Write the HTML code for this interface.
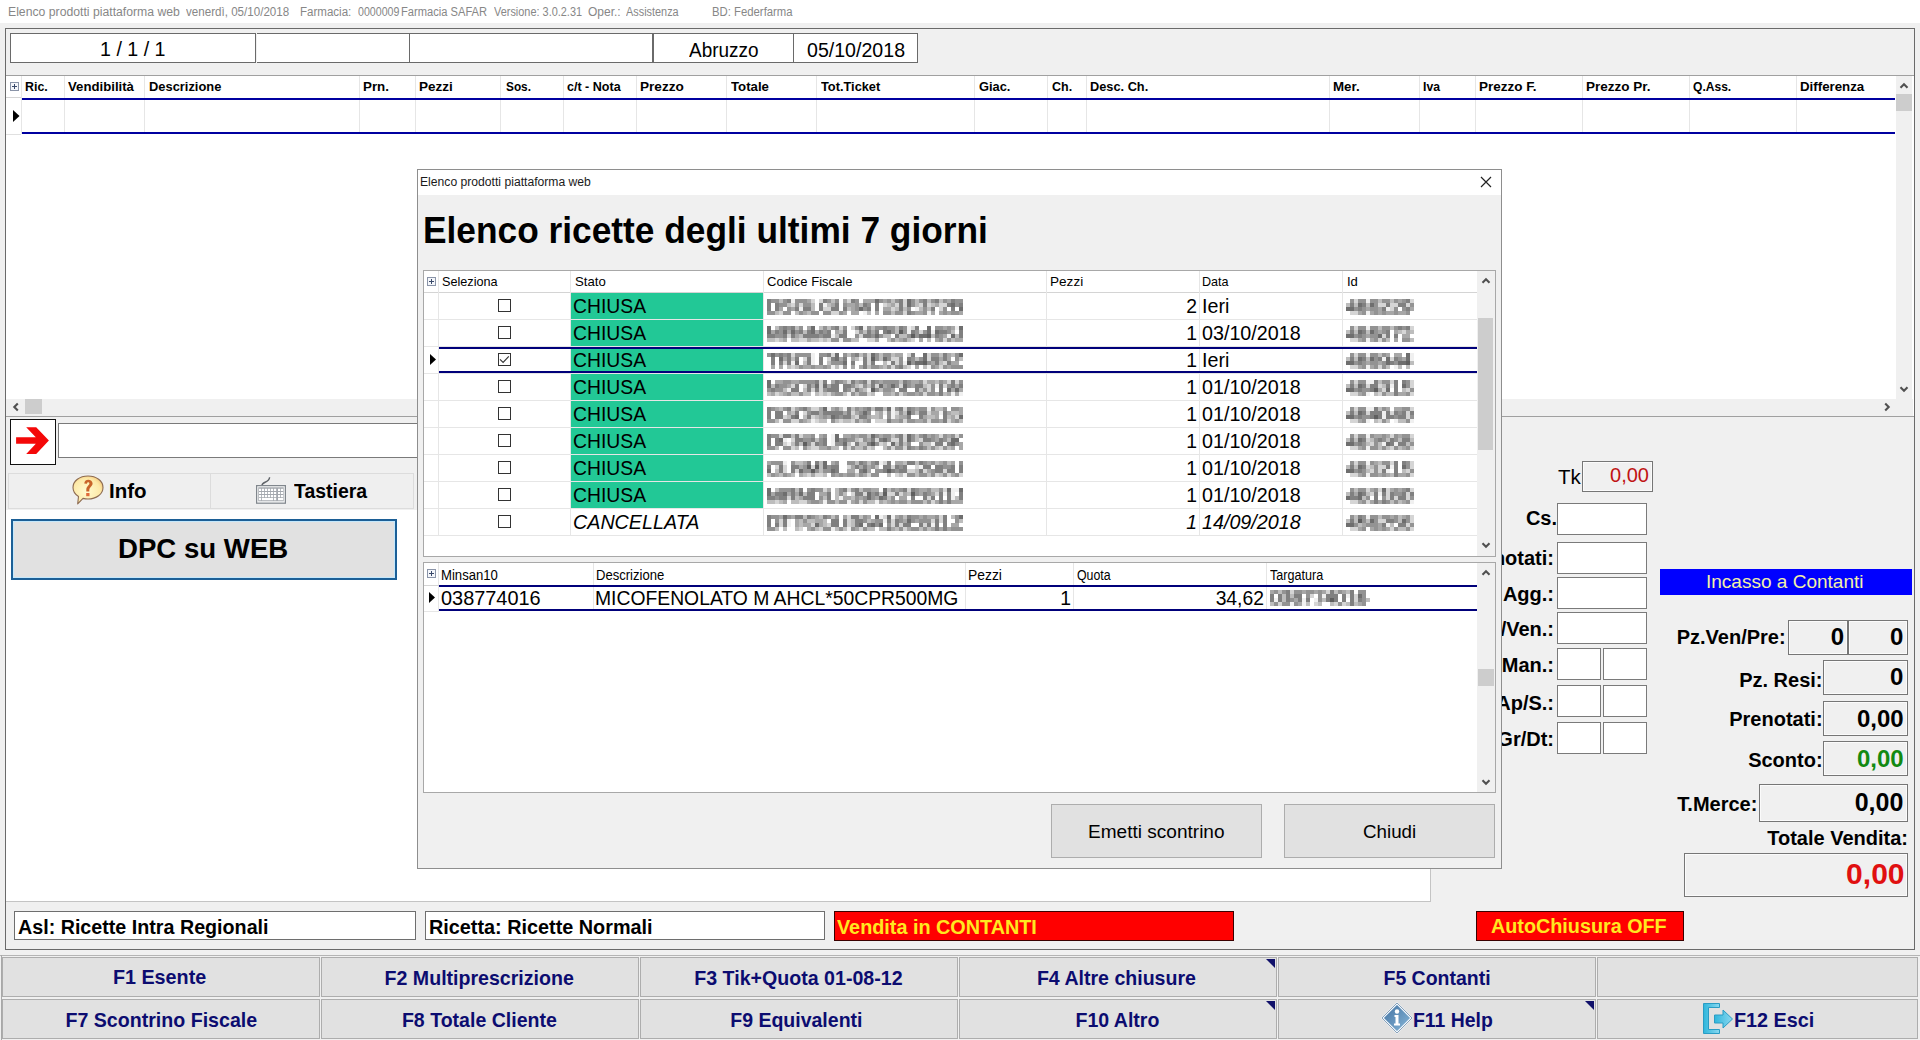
<!DOCTYPE html>
<html><head><meta charset="utf-8"><style>
*{box-sizing:border-box;margin:0;padding:0}
html,body{width:1920px;height:1040px;overflow:hidden;background:#f0f0f0;font-family:"Liberation Sans",sans-serif;color:#000}
.a{position:absolute}
.t{position:absolute;white-space:nowrap;line-height:1}
.sx{display:inline-block;transform-origin:0 0}
</style></head><body>
<div class="a" style="left:0px;top:0px;width:1920px;height:23px;background:#fff"></div>
<div class="t" style="left:7.70px;top:6.08px;font-size:12.5px;color:#878787;"><span class="sx" style="transform:scaleX(0.9779)">Elenco prodotti piattaforma web</span></div>
<div class="t" style="left:185.80px;top:6.08px;font-size:12.5px;color:#878787;"><span class="sx" style="transform:scaleX(0.9281)">venerdì, 05/10/2018</span></div>
<div class="t" style="left:299.80px;top:6.08px;font-size:12.5px;color:#878787;"><span class="sx" style="transform:scaleX(0.9231)">Farmacia:</span></div>
<div class="t" style="left:357.60px;top:6.08px;font-size:12.5px;color:#878787;"><span class="sx" style="transform:scaleX(0.8514)">0000009</span></div>
<div class="t" style="left:401.00px;top:6.08px;font-size:12.5px;color:#878787;"><span class="sx" style="transform:scaleX(0.8912)">Farmacia SAFAR</span></div>
<div class="t" style="left:494.00px;top:6.08px;font-size:12.5px;color:#878787;"><span class="sx" style="transform:scaleX(0.8735)">Versione: 3.0.2.31</span></div>
<div class="t" style="left:588.00px;top:6.08px;font-size:12.5px;color:#878787;"><span class="sx" style="transform:scaleX(0.9603)">Oper.:</span></div>
<div class="t" style="left:626.40px;top:6.08px;font-size:12.5px;color:#878787;"><span class="sx" style="transform:scaleX(0.8706)">Assistenza</span></div>
<div class="t" style="left:712.00px;top:6.08px;font-size:12.5px;color:#878787;"><span class="sx" style="transform:scaleX(0.9066)">BD: Federfarma</span></div>
<div class="a" style="left:5px;top:28px;width:1910px;height:922px;border:1px solid #6a6a6a"></div>
<div class="a" style="left:10px;top:33px;width:246px;height:30px;border:1px solid #6a6a6a;background:#fff"></div>
<div class="a" style="left:257px;top:33px;width:152px;height:30px;border:1px solid #6a6a6a;border-left:none;border-right:none;background:#fff"></div>
<div class="a" style="left:409px;top:33px;width:244px;height:30px;border:1px solid #6a6a6a;background:#fff"></div>
<div class="a" style="left:653px;top:33px;width:141px;height:30px;border:1px solid #6a6a6a;background:#fff"></div>
<div class="a" style="left:793px;top:33px;width:125px;height:30px;border:1px solid #6a6a6a;background:#fff"></div>
<div class="t" style="left:100.00px;top:39.34px;font-size:20.5px;"><span class="sx" style="transform:scaleX(0.9587)">1 / 1 / 1</span></div>
<div class="t" style="left:689.00px;top:39.59px;font-size:20.5px;"><span class="sx" style="transform:scaleX(0.9240)">Abruzzo</span></div>
<div class="t" style="left:806.50px;top:39.59px;font-size:20.5px;"><span class="sx" style="transform:scaleX(0.9554)">05/10/2018</span></div>
<div class="a" style="left:6px;top:75px;width:1908px;height:342px;background:#fff;border-top:1px solid #a0a0a0;border-bottom:1px solid #a0a0a0"></div>
<div class="a" style="left:21px;top:76px;width:1px;height:58px;background:#e6e6e6"></div>
<div class="a" style="left:64px;top:76px;width:1px;height:58px;background:#e6e6e6"></div>
<div class="a" style="left:144px;top:76px;width:1px;height:58px;background:#e6e6e6"></div>
<div class="a" style="left:359px;top:76px;width:1px;height:58px;background:#e6e6e6"></div>
<div class="a" style="left:415px;top:76px;width:1px;height:58px;background:#e6e6e6"></div>
<div class="a" style="left:500px;top:76px;width:1px;height:58px;background:#e6e6e6"></div>
<div class="a" style="left:563px;top:76px;width:1px;height:58px;background:#e6e6e6"></div>
<div class="a" style="left:636px;top:76px;width:1px;height:58px;background:#e6e6e6"></div>
<div class="a" style="left:726px;top:76px;width:1px;height:58px;background:#e6e6e6"></div>
<div class="a" style="left:816px;top:76px;width:1px;height:58px;background:#e6e6e6"></div>
<div class="a" style="left:974px;top:76px;width:1px;height:58px;background:#e6e6e6"></div>
<div class="a" style="left:1047px;top:76px;width:1px;height:58px;background:#e6e6e6"></div>
<div class="a" style="left:1086px;top:76px;width:1px;height:58px;background:#e6e6e6"></div>
<div class="a" style="left:1329px;top:76px;width:1px;height:58px;background:#e6e6e6"></div>
<div class="a" style="left:1419px;top:76px;width:1px;height:58px;background:#e6e6e6"></div>
<div class="a" style="left:1475px;top:76px;width:1px;height:58px;background:#e6e6e6"></div>
<div class="a" style="left:1582px;top:76px;width:1px;height:58px;background:#e6e6e6"></div>
<div class="a" style="left:1689px;top:76px;width:1px;height:58px;background:#e6e6e6"></div>
<div class="a" style="left:1796px;top:76px;width:1px;height:58px;background:#e6e6e6"></div>
<div class="a" style="left:6px;top:97px;width:15px;height:1px;background:#d4d4d4"></div>
<div class="a" style="left:6px;top:134px;width:15px;height:1px;background:#e0e0e0"></div>
<div class="a" style="left:22px;top:98px;width:1873px;height:2px;background:#0000a0"></div>
<div class="a" style="left:22px;top:132px;width:1873px;height:2px;background:#0000a0"></div>
<svg class="a" style="left:10px;top:82px" width="9" height="9"><rect x="0.5" y="0.5" width="8" height="8" fill="#f4f6fa" stroke="#8a94a8"/><path d="M2 4.5 H7 M4.5 2 V7" stroke="#3a4a6a" stroke-width="1"/></svg>
<div class="t" style="left:25.00px;top:80.27px;font-size:13.33px;font-weight:bold;"><span class="sx" style="transform:scaleX(0.9317)">Ric.</span></div>
<div class="t" style="left:68.00px;top:80.27px;font-size:13.33px;font-weight:bold;"><span class="sx" style="transform:scaleX(0.9895)">Vendibilità</span></div>
<div class="t" style="left:149.00px;top:80.27px;font-size:13.33px;font-weight:bold;"><span class="sx" style="transform:scaleX(0.9667)">Descrizione</span></div>
<div class="t" style="left:363.00px;top:80.27px;font-size:13.33px;font-weight:bold;"><span class="sx" style="transform:scaleX(1.0016)">Prn.</span></div>
<div class="t" style="left:419.00px;top:80.27px;font-size:13.33px;font-weight:bold;"><span class="sx" style="transform:scaleX(1.0117)">Pezzi</span></div>
<div class="t" style="left:506.00px;top:80.27px;font-size:13.33px;font-weight:bold;"><span class="sx" style="transform:scaleX(0.8871)">Sos.</span></div>
<div class="t" style="left:567.00px;top:80.27px;font-size:13.33px;font-weight:bold;"><span class="sx" style="transform:scaleX(0.9400)">c/t - Nota</span></div>
<div class="t" style="left:640.00px;top:80.27px;font-size:13.33px;font-weight:bold;"><span class="sx" style="transform:scaleX(1.0193)">Prezzo</span></div>
<div class="t" style="left:731.00px;top:80.27px;font-size:13.33px;font-weight:bold;"><span class="sx" style="transform:scaleX(0.9901)">Totale</span></div>
<div class="t" style="left:821.00px;top:80.27px;font-size:13.33px;font-weight:bold;"><span class="sx" style="transform:scaleX(0.9597)">Tot.Ticket</span></div>
<div class="t" style="left:979.00px;top:80.27px;font-size:13.33px;font-weight:bold;"><span class="sx" style="transform:scaleX(0.9638)">Giac.</span></div>
<div class="t" style="left:1052.00px;top:80.27px;font-size:13.33px;font-weight:bold;"><span class="sx" style="transform:scaleX(0.9366)">Ch.</span></div>
<div class="t" style="left:1090.00px;top:80.27px;font-size:13.33px;font-weight:bold;"><span class="sx" style="transform:scaleX(0.9583)">Desc. Ch.</span></div>
<div class="t" style="left:1333.00px;top:80.27px;font-size:13.33px;font-weight:bold;"><span class="sx" style="transform:scaleX(1.0000)">Mer.</span></div>
<div class="t" style="left:1423.00px;top:80.27px;font-size:13.33px;font-weight:bold;"><span class="sx" style="transform:scaleX(0.9150)">Iva</span></div>
<div class="t" style="left:1479.00px;top:80.27px;font-size:13.33px;font-weight:bold;"><span class="sx" style="transform:scaleX(1.0103)">Prezzo F.</span></div>
<div class="t" style="left:1586.00px;top:80.27px;font-size:13.33px;font-weight:bold;"><span class="sx" style="transform:scaleX(1.0125)">Prezzo Pr.</span></div>
<div class="t" style="left:1693.00px;top:80.27px;font-size:13.33px;font-weight:bold;"><span class="sx" style="transform:scaleX(0.9048)">Q.Ass.</span></div>
<div class="t" style="left:1800.00px;top:80.27px;font-size:13.33px;font-weight:bold;"><span class="sx" style="transform:scaleX(0.9969)">Differenza</span></div>
<svg class="a" style="left:13px;top:110px" width="7" height="12"><path d="M0 0 L6.5 6 L0 12 Z" fill="#000"/></svg>
<div class="a" style="left:1896px;top:76px;width:16px;height:323px;background:#f0f0f0"></div>
<div class="a" style="left:1896px;top:94px;width:16px;height:17px;background:#cdcdcd"></div>
<svg class="a" style="left:1899px;top:82px" width="10" height="7"><path d="M1.5 5.8 L5 2.3 L8.5 5.8" stroke="#505050" stroke-width="2.1" fill="none"/></svg>
<svg class="a" style="left:1899px;top:386px" width="10" height="7"><path d="M1.5 1.2 L5 4.7 L8.5 1.2" stroke="#505050" stroke-width="2.1" fill="none"/></svg>
<div class="a" style="left:6px;top:399px;width:1907px;height:17px;background:#f0f0f0"></div>
<div class="a" style="left:25px;top:399px;width:17px;height:15px;background:#cdcdcd"></div>
<svg class="a" style="left:12px;top:402px" width="7" height="10"><path d="M5.8 1.5 L2.3 5 L5.8 8.5" stroke="#505050" stroke-width="2.1" fill="none"/></svg>
<svg class="a" style="left:1884px;top:402px" width="7" height="10"><path d="M1.2 1.5 L4.7 5 L1.2 8.5" stroke="#505050" stroke-width="2.1" fill="none"/></svg>
<div class="a" style="left:10px;top:419px;width:46px;height:46px;background:#fff;border:1px solid #111"></div>
<svg class="a" style="left:15px;top:427px" width="36" height="29"><path d="M1.1 10.2 L20.8 10.2 L11.2 0.2 L21.2 0.2 L33.9 13.4 L21.2 26.9 L11.2 26.9 L20.8 16.8 L1.1 16.8 Z" fill="#f40808"/></svg>
<div class="a" style="left:58px;top:423px;width:400px;height:35px;background:#fff;border:1px solid #7a7a7a"></div>
<div class="a" style="left:8px;top:473px;width:203px;height:36px;background:#efefef;border:1px solid #dcdcdc"></div>
<div class="a" style="left:210px;top:473px;width:204px;height:36px;background:#efefef;border:1px solid #dcdcdc"></div>
<div class="t" style="left:109.00px;top:481.00px;font-size:20px;font-weight:bold;"><span class="sx" style="transform:scaleX(1.0241)">Info</span></div>
<div class="t" style="left:294.40px;top:481.40px;font-size:20px;font-weight:bold;"><span class="sx" style="transform:scaleX(0.9715)">Tastiera</span></div>
<svg class="a" style="left:72px;top:475px" width="34" height="32"><defs><radialGradient id="qg" cx="45%" cy="55%" r="65%"><stop offset="0" stop-color="#fffbd0"/><stop offset="0.7" stop-color="#fde9a8"/><stop offset="1" stop-color="#f5c070"/></radialGradient></defs><path d="M6.5 21.5 C2.5 19 1 16 1 12.5 C1 5.8 7.7 1 16 1 C24.3 1 31 5.8 31 12.5 C31 19.2 24.3 24 16 24 C14.2 24 12.6 23.8 11 23.4 L5.7 28.8 Z" fill="url(#qg)" stroke="#8c6a50" stroke-width="1.1" stroke-linejoin="round"/><path d="M12.2 8.6 C12.6 5.8 14.4 4.8 16.2 4.8 C18.6 4.8 20.6 6.2 20.6 8.6 C20.6 11.6 17.3 12 17.3 15.2 L17.3 16.5 L14.3 16.5 L14.3 15 C14.3 11 17.4 10.6 17.4 8.6 C17.4 7.6 16.8 7.2 16.2 7.2 C15.4 7.2 15 7.8 14.9 8.8 Z" fill="#c8642a"/><rect x="14.2" y="18" width="3.3" height="3.2" fill="#e06a3a"/></svg>
<svg class="a" style="left:256px;top:476px" width="31" height="29"><path d="M6 9.3 C6 5.5 13.2 7 13.6 1.2" stroke="#5f6368" stroke-width="1.4" fill="none"/><rect x="0.6" y="9.6" width="28.8" height="17.6" fill="#f4f5f6" stroke="#80868c" stroke-width="1.2"/><rect x="2.3" y="11.3" width="25.4" height="13.9" fill="#a4a8ae"/><path fill="#ffffff" d="M3 12.8h2.2v2.2h-2.2zM6 12.8h2.2v2.2h-2.2zM9 12.8h2.2v2.2h-2.2zM12 12.8h2.2v2.2h-2.2zM15 12.8h2.2v2.2h-2.2zM18 12.8h2.2v2.2h-2.2zM22 12.8h2.2v2.2h-2.2zM25 12.8h2.2v2.2h-2.2zM3 15.9h2.2v2.2h-2.2zM6 15.9h2.2v2.2h-2.2zM9 15.9h2.2v2.2h-2.2zM12 15.9h2.2v2.2h-2.2zM15 15.9h2.2v2.2h-2.2zM18 15.9h2.2v2.2h-2.2zM22 15.9h2.2v2.2h-2.2zM25 15.9h2.2v2.2h-2.2zM3 19h2.2v2.2h-2.2zM6 19h2.2v2.2h-2.2zM9 19h2.2v2.2h-2.2zM12 19h2.2v2.2h-2.2zM15 19h2.2v2.2h-2.2zM18 19h2.2v2.2h-2.2zM22 19h2.2v2.2h-2.2zM25 19h2.2v2.2h-2.2zM3 22h2.2v2.2h-2.2zM18 22h2.2v2.2h-2.2zM22 22h2.2v2.2h-2.2zM6 22h11.2v2.2h-11.2zM22 22h5.2v2.2h-5.2z"/></svg>
<div class="a" style="left:6px;top:510px;width:1425px;height:392px;background:#fff;border-right:1px solid #c4c4c4;border-bottom:1px solid #c4c4c4"></div>
<div class="a" style="left:11px;top:519px;width:386px;height:61px;background:#e1e1e1;border:2px solid #1c5f96;box-shadow:inset 0 0 0 1px #c4e8fc"></div>
<div class="t" style="left:118.00px;top:535.36px;font-size:28px;font-weight:bold;"><span class="sx" style="transform:scaleX(0.9859)">DPC su WEB</span></div>
<div class="t" style="left:980.80px;top:467.33px;width:600px;text-align:right;font-size:20.5px;"><span class="sx" style="transform-origin:100% 0;transform:scaleX(1.0000)">Tk</span></div>
<div class="a" style="left:1582px;top:461px;width:71px;height:31px;border:1px solid #767676;box-shadow:inset 0 0 0 1px #fbfbfb"></div>
<div class="t" style="left:1049.00px;top:465.20px;width:600px;text-align:right;font-size:20px;color:#c01414"><span class="sx" style="transform-origin:100% 0;transform:scaleX(1.0000)">0,00</span></div>
<div class="t" style="left:957.00px;top:508.40px;width:600px;text-align:right;font-size:20px;font-weight:bold;"><span class="sx" style="transform-origin:100% 0;transform:scaleX(1.0000)">Cs.</span></div>
<div class="a" style="left:1557px;top:503px;width:90px;height:32px;background:#fff;border:1px solid #7a7a7a"></div>
<div class="t" style="left:954.00px;top:548.40px;width:600px;text-align:right;font-size:20px;font-weight:bold;"><span class="sx" style="transform-origin:100% 0;transform:scaleX(1.0000)">Prenotati:</span></div>
<div class="a" style="left:1557px;top:542px;width:90px;height:32px;background:#fff;border:1px solid #7a7a7a"></div>
<div class="t" style="left:954.00px;top:584.40px;width:600px;text-align:right;font-size:20px;font-weight:bold;"><span class="sx" style="transform-origin:100% 0;transform:scaleX(1.0000)">Pr.Agg.:</span></div>
<div class="a" style="left:1557px;top:577px;width:90px;height:32px;background:#fff;border:1px solid #7a7a7a"></div>
<div class="t" style="left:954.00px;top:619.40px;width:600px;text-align:right;font-size:20px;font-weight:bold;"><span class="sx" style="transform-origin:100% 0;transform:scaleX(1.0000)">Pz/Ven.:</span></div>
<div class="a" style="left:1557px;top:612px;width:90px;height:32px;background:#fff;border:1px solid #7a7a7a"></div>
<div class="t" style="left:954.00px;top:655.40px;width:600px;text-align:right;font-size:20px;font-weight:bold;"><span class="sx" style="transform-origin:100% 0;transform:scaleX(1.0000)">Pr.Man.:</span></div>
<div class="a" style="left:1557px;top:648px;width:44px;height:32px;background:#fff;border:1px solid #7a7a7a"></div>
<div class="a" style="left:1603px;top:648px;width:44px;height:32px;background:#fff;border:1px solid #7a7a7a"></div>
<div class="t" style="left:954.00px;top:693.40px;width:600px;text-align:right;font-size:20px;font-weight:bold;"><span class="sx" style="transform-origin:100% 0;transform:scaleX(1.0000)">Tr.Ap/S.:</span></div>
<div class="a" style="left:1557px;top:685px;width:44px;height:32px;background:#fff;border:1px solid #7a7a7a"></div>
<div class="a" style="left:1603px;top:685px;width:44px;height:32px;background:#fff;border:1px solid #7a7a7a"></div>
<div class="t" style="left:954.00px;top:729.40px;width:600px;text-align:right;font-size:20px;font-weight:bold;"><span class="sx" style="transform-origin:100% 0;transform:scaleX(1.0000)">Gr/Dt:</span></div>
<div class="a" style="left:1557px;top:722px;width:44px;height:32px;background:#fff;border:1px solid #7a7a7a"></div>
<div class="a" style="left:1603px;top:722px;width:44px;height:32px;background:#fff;border:1px solid #7a7a7a"></div>
<div class="a" style="left:1660px;top:569px;width:252px;height:26px;background:#0000ff"></div>
<div class="t" style="left:1706.00px;top:573.00px;font-size:18.5px;color:#f2f0a8;"><span class="sx" style="transform:scaleX(1.0279)">Incasso a Contanti</span></div>
<div class="t" style="left:1185.60px;top:627.00px;width:600px;text-align:right;font-size:20px;font-weight:bold;"><span class="sx" style="transform-origin:100% 0;transform:scaleX(1.0000)">Pz.Ven/Pre:</span></div>
<div class="a" style="left:1788px;top:620px;width:60px;height:35px;border:1px solid #767676;box-shadow:inset 0 0 0 1px #fbfbfb"></div>
<div class="a" style="left:1848px;top:620px;width:60px;height:35px;border:1px solid #767676;box-shadow:inset 0 0 0 1px #fbfbfb"></div>
<div class="t" style="left:1244.00px;top:625.28px;width:600px;text-align:right;font-size:24px;font-weight:bold;"><span class="sx" style="transform-origin:100% 0;transform:scaleX(1.0000)">0</span></div>
<div class="t" style="left:1303.40px;top:625.28px;width:600px;text-align:right;font-size:24px;font-weight:bold;"><span class="sx" style="transform-origin:100% 0;transform:scaleX(1.0000)">0</span></div>
<div class="t" style="left:1222.50px;top:669.90px;width:600px;text-align:right;font-size:20px;font-weight:bold;"><span class="sx" style="transform-origin:100% 0;transform:scaleX(1.0000)">Pz. Resi:</span></div>
<div class="a" style="left:1823px;top:660px;width:85px;height:35px;border:1px solid #767676;box-shadow:inset 0 0 0 1px #fbfbfb"></div>
<div class="t" style="left:1303.40px;top:665.28px;width:600px;text-align:right;font-size:24px;font-weight:bold;"><span class="sx" style="transform-origin:100% 0;transform:scaleX(1.0000)">0</span></div>
<div class="t" style="left:1222.60px;top:709.20px;width:600px;text-align:right;font-size:20px;font-weight:bold;"><span class="sx" style="transform-origin:100% 0;transform:scaleX(1.0000)">Prenotati:</span></div>
<div class="a" style="left:1823px;top:701px;width:85px;height:35px;border:1px solid #767676;box-shadow:inset 0 0 0 1px #fbfbfb"></div>
<div class="t" style="left:1303.60px;top:706.68px;width:600px;text-align:right;font-size:24px;font-weight:bold;"><span class="sx" style="transform-origin:100% 0;transform:scaleX(1.0000)">0,00</span></div>
<div class="t" style="left:1222.60px;top:750.40px;width:600px;text-align:right;font-size:20px;font-weight:bold;"><span class="sx" style="transform-origin:100% 0;transform:scaleX(1.0000)">Sconto:</span></div>
<div class="a" style="left:1823px;top:741px;width:85px;height:35px;border:1px solid #767676;box-shadow:inset 0 0 0 1px #fbfbfb"></div>
<div class="t" style="left:1303.60px;top:746.68px;width:600px;text-align:right;font-size:24px;font-weight:bold;color:#128a12"><span class="sx" style="transform-origin:100% 0;transform:scaleX(1.0000)">0,00</span></div>
<div class="t" style="left:1157.40px;top:794.40px;width:600px;text-align:right;font-size:20px;font-weight:bold;"><span class="sx" style="transform-origin:100% 0;transform:scaleX(1.0000)">T.Merce:</span></div>
<div class="a" style="left:1759px;top:784px;width:149px;height:38px;border:1px solid #767676;box-shadow:inset 0 0 0 1px #fbfbfb"></div>
<div class="t" style="left:1303.40px;top:790.15px;width:600px;text-align:right;font-size:25px;font-weight:bold;"><span class="sx" style="transform-origin:100% 0;transform:scaleX(1.0000)">0,00</span></div>
<div class="t" style="left:1308.00px;top:828.40px;width:600px;text-align:right;font-size:20px;font-weight:bold;"><span class="sx" style="transform-origin:100% 0;transform:scaleX(1.0000)">Totale Vendita:</span></div>
<div class="a" style="left:1684px;top:853px;width:224px;height:44px;border:1px solid #767676;box-shadow:inset 0 0 0 1px #fbfbfb"></div>
<div class="t" style="left:1304.50px;top:858.50px;width:600px;text-align:right;font-size:30px;font-weight:bold;color:#e01010"><span class="sx" style="transform-origin:100% 0;transform:scaleX(1.0000)">0,00</span></div>
<div class="a" style="left:14px;top:911px;width:402px;height:29px;background:#fff;border:1px solid #6e6e6e"></div>
<div class="t" style="left:18.30px;top:917.00px;font-size:20px;font-weight:bold;"><span class="sx" style="transform:scaleX(0.9844)">Asl: Ricette Intra Regionali</span></div>
<div class="a" style="left:425px;top:911px;width:400px;height:29px;background:#fff;border:1px solid #6e6e6e"></div>
<div class="t" style="left:428.80px;top:917.00px;font-size:20px;font-weight:bold;"><span class="sx" style="transform:scaleX(0.9910)">Ricetta: Ricette Normali</span></div>
<div class="a" style="left:834px;top:911px;width:400px;height:30px;background:#ff0000;border:1px solid #3a0000"></div>
<div class="t" style="left:837.30px;top:916.70px;font-size:20px;font-weight:bold;color:#ffe820"><span class="sx" style="transform:scaleX(0.9900)">Vendita in CONTANTI</span></div>
<div class="a" style="left:1476px;top:911px;width:208px;height:30px;background:#ff0000;border:1px solid #3a0000"></div>
<div class="t" style="left:1491.20px;top:916.30px;font-size:20px;font-weight:bold;color:#ffe820"><span class="sx" style="transform:scaleX(0.9881)">AutoChiusura OFF</span></div>
<div class="a" style="left:0px;top:955px;width:1920px;height:1px;background:#b4b4b4"></div>
<div class="a" style="left:1px;top:955px;width:1px;height:85px;background:#a8a8a8"></div>
<div class="a" style="left:2px;top:957px;width:318px;height:40px;background:#e1e1e1;border:1px solid #adadad"></div>
<div class="a" style="left:321px;top:957px;width:318px;height:40px;background:#e1e1e1;border:1px solid #adadad"></div>
<div class="a" style="left:640px;top:957px;width:318px;height:40px;background:#e1e1e1;border:1px solid #adadad"></div>
<div class="a" style="left:959px;top:957px;width:318px;height:40px;background:#e1e1e1;border:1px solid #adadad"></div>
<div class="a" style="left:1278px;top:957px;width:318px;height:40px;background:#e1e1e1;border:1px solid #adadad"></div>
<div class="a" style="left:1597px;top:957px;width:321px;height:40px;background:#e1e1e1;border:1px solid #adadad"></div>
<div class="a" style="left:2px;top:999px;width:318px;height:40px;background:#e1e1e1;border:1px solid #adadad"></div>
<div class="a" style="left:321px;top:999px;width:318px;height:40px;background:#e1e1e1;border:1px solid #adadad"></div>
<div class="a" style="left:640px;top:999px;width:318px;height:40px;background:#e1e1e1;border:1px solid #adadad"></div>
<div class="a" style="left:959px;top:999px;width:318px;height:40px;background:#e1e1e1;border:1px solid #adadad"></div>
<div class="a" style="left:1278px;top:999px;width:318px;height:40px;background:#e1e1e1;border:1px solid #adadad"></div>
<div class="a" style="left:1597px;top:999px;width:321px;height:40px;background:#e1e1e1;border:1px solid #adadad"></div>
<div class="t" style="left:-240.10px;top:968.29px;width:800px;text-align:center;font-size:19.3px;font-weight:bold;color:#0c0c70;"><span class="sx" style="transform-origin:50% 0;transform:scaleX(1.0241)">F1 Esente</span></div>
<div class="t" style="left:79.00px;top:969.29px;width:800px;text-align:center;font-size:19.3px;font-weight:bold;color:#0c0c70;"><span class="sx" style="transform-origin:50% 0;transform:scaleX(1.0152)">F2 Multiprescrizione</span></div>
<div class="t" style="left:398.30px;top:968.69px;width:800px;text-align:center;font-size:19.3px;font-weight:bold;color:#0c0c70;"><span class="sx" style="transform-origin:50% 0;transform:scaleX(1.0166)">F3 Tik+Quota 01-08-12</span></div>
<div class="t" style="left:716.50px;top:969.29px;width:800px;text-align:center;font-size:19.3px;font-weight:bold;color:#0c0c70;"><span class="sx" style="transform-origin:50% 0;transform:scaleX(1.0142)">F4 Altre chiusure</span></div>
<div class="t" style="left:1037.00px;top:969.29px;width:800px;text-align:center;font-size:19.3px;font-weight:bold;color:#0c0c70;"><span class="sx" style="transform-origin:50% 0;transform:scaleX(1.0096)">F5 Contanti</span></div>
<div class="t" style="left:-239.20px;top:1011.49px;width:800px;text-align:center;font-size:19.3px;font-weight:bold;color:#0c0c70;"><span class="sx" style="transform-origin:50% 0;transform:scaleX(1.0165)">F7 Scontrino Fiscale</span></div>
<div class="t" style="left:79.40px;top:1011.49px;width:800px;text-align:center;font-size:19.3px;font-weight:bold;color:#0c0c70;"><span class="sx" style="transform-origin:50% 0;transform:scaleX(1.0141)">F8 Totale Cliente</span></div>
<div class="t" style="left:396.40px;top:1011.49px;width:800px;text-align:center;font-size:19.3px;font-weight:bold;color:#0c0c70;"><span class="sx" style="transform-origin:50% 0;transform:scaleX(1.0115)">F9 Equivalenti</span></div>
<div class="t" style="left:717.90px;top:1011.49px;width:800px;text-align:center;font-size:19.3px;font-weight:bold;color:#0c0c70;"><span class="sx" style="transform-origin:50% 0;transform:scaleX(1.0131)">F10 Altro</span></div>
<div class="t" style="left:1412.60px;top:1010.69px;font-size:19.3px;font-weight:bold;color:#0c0c70;"><span class="sx" style="transform:scaleX(1.0065)">F11 Help</span></div>
<div class="t" style="left:1734.40px;top:1011.09px;font-size:19.3px;font-weight:bold;color:#0c0c70;"><span class="sx" style="transform:scaleX(1.0258)">F12 Esci</span></div>
<svg class="a" style="left:1266px;top:959px" width="9" height="9"><path d="M0 0 H9 V9 Z" fill="#10106a"/></svg>
<svg class="a" style="left:1266px;top:1001px" width="9" height="9"><path d="M0 0 H9 V9 Z" fill="#10106a"/></svg>
<svg class="a" style="left:1585px;top:1001px" width="9" height="9"><path d="M0 0 H9 V9 Z" fill="#10106a"/></svg>
<svg class="a" style="left:1381px;top:1002px" width="32" height="32"><defs><linearGradient id="dg" x1="0" y1="0" x2="1" y2="1"><stop offset="0" stop-color="#3f6f9f"/><stop offset="1" stop-color="#8cbbdc"/></linearGradient></defs><path d="M16 1.5 L30.5 16 L16 30.5 L1.5 16 Z" fill="url(#dg)" stroke="#f4f8fc" stroke-width="2"/><path d="M16 1 L31 16 L16 31 L1 16 Z" fill="none" stroke="#6a8aa8" stroke-width="0.8"/><circle cx="16" cy="9.5" r="2.2" fill="#fff"/><path d="M13.5 13 H17.5 V21.5 H19 V23.5 H13 V21.5 H14.5 V15 H13.5 Z" fill="#fff"/></svg>
<svg class="a" style="left:1702px;top:1002px" width="32" height="33"><defs><linearGradient id="eg" x1="0" y1="0" x2="1" y2="0"><stop offset="0" stop-color="#2fb6dc"/><stop offset="1" stop-color="#8ad8f0"/></linearGradient></defs><path d="M1.5 1.5 H17.5 V5.5 H6.5 V27.5 H17.5 V31.5 H1.5 Z" fill="url(#eg)" stroke="#2a9cc4" stroke-width="1"/><path d="M12.5 13 H21 V8 L30.5 17 L21 26 V21 H12.5 Z" fill="url(#eg)" stroke="#2a9cc4" stroke-width="1"/></svg>
<div class="a" style="left:417px;top:169px;width:1085px;height:700px;background:#f0f0f0;border:1px solid #8e8e8e"></div>
<div class="a" style="left:418px;top:170px;width:1083px;height:25px;background:#fff"></div>
<div class="t" style="left:420.00px;top:176.04px;font-size:12px;color:#1a1a1a;"><span class="sx" style="transform:scaleX(1.0125)">Elenco prodotti piattaforma web</span></div>
<svg class="a" style="left:1480px;top:176px" width="12" height="12"><path d="M1 1 L11 11 M11 1 L1 11" stroke="#222" stroke-width="1.2"/></svg>
<div class="t" style="left:423.40px;top:212.52px;font-size:36px;font-weight:bold;"><span class="sx" style="transform:scaleX(0.9805)">Elenco ricette degli ultimi 7 giorni</span></div>
<div class="a" style="left:423px;top:270px;width:1073px;height:287px;background:#fff;border:1px solid #a8a8a8"></div>
<div class="a" style="left:424px;top:292px;width:1053px;height:1px;background:#d4d4d4"></div>
<div class="a" style="left:438px;top:271px;width:1px;height:265px;background:#e6e6e6"></div>
<div class="a" style="left:570px;top:271px;width:1px;height:265px;background:#e6e6e6"></div>
<div class="a" style="left:763px;top:271px;width:1px;height:265px;background:#e6e6e6"></div>
<div class="a" style="left:1046px;top:271px;width:1px;height:265px;background:#e6e6e6"></div>
<div class="a" style="left:1199px;top:271px;width:1px;height:265px;background:#e6e6e6"></div>
<div class="a" style="left:1342px;top:271px;width:1px;height:265px;background:#e6e6e6"></div>
<svg class="a" style="left:427px;top:277px" width="9" height="9"><rect x="0.5" y="0.5" width="8" height="8" fill="#f4f6fa" stroke="#8a94a8"/><path d="M2 4.5 H7 M4.5 2 V7" stroke="#3a4a6a" stroke-width="1"/></svg>
<div class="t" style="left:442.00px;top:274.85px;font-size:13.5px;"><span class="sx" style="transform:scaleX(0.9371)">Seleziona</span></div>
<div class="t" style="left:574.60px;top:274.85px;font-size:13.5px;"><span class="sx" style="transform:scaleX(0.9758)">Stato</span></div>
<div class="t" style="left:767.00px;top:274.85px;font-size:13.5px;"><span class="sx" style="transform:scaleX(0.9659)">Codice Fiscale</span></div>
<div class="t" style="left:1049.80px;top:274.85px;font-size:13.5px;"><span class="sx" style="transform:scaleX(1.0050)">Pezzi</span></div>
<div class="t" style="left:1202.00px;top:274.85px;font-size:13.5px;"><span class="sx" style="transform:scaleX(0.9321)">Data</span></div>
<div class="t" style="left:1346.80px;top:274.85px;font-size:13.5px;"><span class="sx" style="transform:scaleX(0.9654)">Id</span></div>
<div class="a" style="left:424px;top:319px;width:1053px;height:1px;background:#e6e6e6"></div>
<div class="a" style="left:571px;top:293px;width:192px;height:26px;background:#22c896"></div>
<div class="t" style="left:573px;top:297px;font-size:19.33px"><span class="sx" style="transform-origin:0 0;transform:scaleX(1.0)">CHIUSA</span></div>
<svg class="a" style="left:767px;top:299px" width="196" height="16" shape-rendering="crispEdges"><path fill="rgb(110,110,110)" d="M108 0h4v4h-4zM140 0h4v4h-4zM140 4h4v4h-4zM184 4h4v4h-4zM92 8h4v4h-4zM192 8h4v4h-4z"/><path fill="rgb(128,128,128)" d="M0 0h4v4h-4zM20 0h4v4h-4zM56 0h4v4h-4zM84 0h4v4h-4zM132 0h4v4h-4zM156 0h4v4h-4zM168 0h4v4h-4zM184 0h4v4h-4zM0 4h4v4h-4zM8 4h4v4h-4zM52 4h4v4h-4zM68 4h4v4h-4zM96 4h4v4h-4zM108 4h4v4h-4zM132 4h4v4h-4zM156 4h4v4h-4zM180 4h4v4h-4zM192 4h4v4h-4zM0 8h4v4h-4zM8 8h4v4h-4zM28 8h4v4h-4zM36 8h4v4h-4zM40 8h4v4h-4zM52 8h4v4h-4zM64 8h4v4h-4zM68 8h4v4h-4zM76 8h4v4h-4zM100 8h4v4h-4zM108 8h4v4h-4zM132 8h4v4h-4zM164 8h4v4h-4zM184 8h4v4h-4zM140 12h4v4h-4z"/><path fill="rgb(147,147,147)" d="M4 0h4v4h-4zM8 0h4v4h-4zM16 0h4v4h-4zM28 0h4v4h-4zM32 0h4v4h-4zM36 0h4v4h-4zM60 0h4v4h-4zM68 0h4v4h-4zM88 0h4v4h-4zM112 0h4v4h-4zM120 0h4v4h-4zM128 0h4v4h-4zM144 0h4v4h-4zM152 0h4v4h-4zM164 0h4v4h-4zM176 0h4v4h-4zM188 0h4v4h-4zM192 0h4v4h-4zM12 4h4v4h-4zM16 4h4v4h-4zM28 4h4v4h-4zM36 4h4v4h-4zM40 4h4v4h-4zM76 4h4v4h-4zM88 4h4v4h-4zM100 4h4v4h-4zM144 4h4v4h-4zM188 4h4v4h-4zM20 8h4v4h-4zM88 8h4v4h-4zM96 8h4v4h-4zM140 8h4v4h-4zM156 8h4v4h-4zM176 8h4v4h-4zM0 12h4v4h-4zM4 12h4v4h-4zM16 12h4v4h-4zM20 12h4v4h-4zM32 12h4v4h-4zM44 12h4v4h-4zM48 12h4v4h-4zM56 12h4v4h-4zM60 12h4v4h-4zM72 12h4v4h-4zM116 12h4v4h-4zM120 12h4v4h-4zM128 12h4v4h-4zM132 12h4v4h-4zM144 12h4v4h-4zM156 12h4v4h-4zM176 12h4v4h-4zM184 12h4v4h-4zM188 12h4v4h-4z"/><path fill="rgb(167,167,167)" d="M40 0h4v4h-4zM76 0h4v4h-4zM96 0h4v4h-4zM100 0h4v4h-4zM104 0h4v4h-4zM116 0h4v4h-4zM180 0h4v4h-4zM64 4h4v4h-4zM80 4h4v4h-4zM84 4h4v4h-4zM124 4h4v4h-4zM168 4h4v4h-4zM12 8h4v4h-4zM24 8h4v4h-4zM84 8h4v4h-4zM116 8h4v4h-4zM120 8h4v4h-4zM36 12h4v4h-4zM76 12h4v4h-4zM84 12h4v4h-4zM88 12h4v4h-4zM108 12h4v4h-4zM148 12h4v4h-4zM152 12h4v4h-4zM164 12h4v4h-4zM172 12h4v4h-4zM180 12h4v4h-4zM192 12h4v4h-4z"/><path fill="rgb(189,189,189)" d="M12 0h4v4h-4zM64 0h4v4h-4zM124 0h4v4h-4zM148 0h4v4h-4zM160 0h4v4h-4zM172 0h4v4h-4zM20 4h4v4h-4zM44 4h4v4h-4zM60 4h4v4h-4zM92 4h4v4h-4zM120 4h4v4h-4zM148 4h4v4h-4zM164 4h4v4h-4zM44 8h4v4h-4zM80 8h4v4h-4zM128 8h4v4h-4zM136 8h4v4h-4zM152 8h4v4h-4zM160 8h4v4h-4zM8 12h4v4h-4zM28 12h4v4h-4zM40 12h4v4h-4zM100 12h4v4h-4zM124 12h4v4h-4z"/><path fill="rgb(213,213,213)" d="M44 0h4v4h-4zM52 0h4v4h-4zM80 0h4v4h-4zM136 0h4v4h-4zM24 4h4v4h-4zM32 4h4v4h-4zM116 4h4v4h-4zM128 4h4v4h-4zM136 4h4v4h-4zM152 4h4v4h-4zM160 4h4v4h-4zM172 4h4v4h-4zM176 4h4v4h-4zM56 8h4v4h-4zM60 8h4v4h-4zM124 8h4v4h-4zM172 8h4v4h-4zM12 12h4v4h-4zM64 12h4v4h-4zM68 12h4v4h-4zM136 12h4v4h-4z"/><path fill="rgb(240,240,240)" d="M24 0h4v4h-4zM56 4h4v4h-4zM32 8h4v4h-4zM148 8h4v4h-4zM96 12h4v4h-4zM160 12h4v4h-4z"/></svg>
<div class="t" style="left:1046px;top:297px;width:151px;text-align:right;font-size:19.33px">2</div>
<div class="t" style="left:1202px;top:297px;font-size:19.33px"><span class="sx" style="transform-origin:0 0;transform:scaleX(1.02)">Ieri</span></div>
<svg class="a" style="left:1346px;top:299px" width="68" height="16" shape-rendering="crispEdges"><path fill="rgb(110,110,110)" d="M12 4h4v4h-4zM24 4h4v4h-4zM0 8h4v4h-4zM4 8h4v4h-4z"/><path fill="rgb(128,128,128)" d="M60 0h4v4h-4zM4 4h4v4h-4zM16 4h4v4h-4zM40 4h4v4h-4zM52 4h4v4h-4zM56 4h4v4h-4zM12 8h4v4h-4zM36 8h4v4h-4zM60 8h4v4h-4z"/><path fill="rgb(147,147,147)" d="M4 0h4v4h-4zM12 0h4v4h-4zM16 0h4v4h-4zM24 0h4v4h-4zM28 0h4v4h-4zM36 0h4v4h-4zM40 0h4v4h-4zM48 0h4v4h-4zM56 0h4v4h-4zM28 4h4v4h-4zM64 4h4v4h-4zM8 8h4v4h-4zM16 8h4v4h-4zM24 8h4v4h-4zM28 8h4v4h-4zM48 8h4v4h-4zM56 8h4v4h-4zM16 12h4v4h-4zM28 12h4v4h-4zM36 12h4v4h-4zM48 12h4v4h-4zM60 12h4v4h-4z"/><path fill="rgb(167,167,167)" d="M52 0h4v4h-4zM20 8h4v4h-4zM32 8h4v4h-4zM64 8h4v4h-4zM12 12h4v4h-4zM24 12h4v4h-4zM32 12h4v4h-4zM40 12h4v4h-4zM44 12h4v4h-4zM52 12h4v4h-4zM56 12h4v4h-4z"/><path fill="rgb(189,189,189)" d="M32 0h4v4h-4zM44 0h4v4h-4zM0 4h4v4h-4zM8 4h4v4h-4zM20 4h4v4h-4z"/><path fill="rgb(213,213,213)" d="M8 0h4v4h-4zM64 0h4v4h-4zM32 4h4v4h-4zM36 4h4v4h-4zM44 4h4v4h-4zM48 4h4v4h-4zM60 4h4v4h-4zM44 8h4v4h-4zM4 12h4v4h-4zM8 12h4v4h-4z"/><path fill="rgb(240,240,240)" d="M20 0h4v4h-4zM40 8h4v4h-4zM20 12h4v4h-4z"/></svg>
<div class="a" style="left:498px;top:299px;width:13px;height:13px;background:#fff;border:1px solid #333"></div>
<div class="a" style="left:424px;top:346px;width:1053px;height:1px;background:#e6e6e6"></div>
<div class="a" style="left:571px;top:320px;width:192px;height:26px;background:#22c896"></div>
<div class="t" style="left:573px;top:324px;font-size:19.33px"><span class="sx" style="transform-origin:0 0;transform:scaleX(1.0)">CHIUSA</span></div>
<svg class="a" style="left:767px;top:326px" width="196" height="16" shape-rendering="crispEdges"><path fill="rgb(95,95,95)" d="M132 4h4v4h-4zM144 8h4v4h-4zM160 8h4v4h-4z"/><path fill="rgb(110,110,110)" d="M0 0h4v4h-4zM44 0h4v4h-4zM92 0h4v4h-4zM160 0h4v4h-4zM192 0h4v4h-4zM0 4h4v4h-4zM16 4h4v4h-4zM24 4h4v4h-4zM44 4h4v4h-4zM120 4h4v4h-4zM160 4h4v4h-4zM168 4h4v4h-4zM108 8h4v4h-4zM152 8h4v4h-4zM156 8h4v4h-4zM184 8h4v4h-4z"/><path fill="rgb(128,128,128)" d="M16 0h4v4h-4zM24 0h4v4h-4zM68 0h4v4h-4zM116 0h4v4h-4zM132 0h4v4h-4zM148 0h4v4h-4zM8 4h4v4h-4zM32 4h4v4h-4zM40 4h4v4h-4zM52 4h4v4h-4zM60 4h4v4h-4zM76 4h4v4h-4zM100 4h4v4h-4zM108 4h4v4h-4zM116 4h4v4h-4zM144 4h4v4h-4zM172 4h4v4h-4zM176 4h4v4h-4zM192 4h4v4h-4zM0 8h4v4h-4zM4 8h4v4h-4zM16 8h4v4h-4zM24 8h4v4h-4zM36 8h4v4h-4zM40 8h4v4h-4zM44 8h4v4h-4zM48 8h4v4h-4zM56 8h4v4h-4zM60 8h4v4h-4zM72 8h4v4h-4zM76 8h4v4h-4zM96 8h4v4h-4zM100 8h4v4h-4zM128 8h4v4h-4zM168 8h4v4h-4zM192 8h4v4h-4z"/><path fill="rgb(147,147,147)" d="M12 0h4v4h-4zM20 0h4v4h-4zM32 0h4v4h-4zM56 0h4v4h-4zM64 0h4v4h-4zM76 0h4v4h-4zM88 0h4v4h-4zM100 0h4v4h-4zM108 0h4v4h-4zM112 0h4v4h-4zM120 0h4v4h-4zM124 0h4v4h-4zM136 0h4v4h-4zM168 0h4v4h-4zM172 0h4v4h-4zM180 0h4v4h-4zM12 4h4v4h-4zM28 4h4v4h-4zM56 4h4v4h-4zM92 4h4v4h-4zM124 4h4v4h-4zM136 4h4v4h-4zM148 4h4v4h-4zM156 4h4v4h-4zM180 4h4v4h-4zM8 8h4v4h-4zM12 8h4v4h-4zM52 8h4v4h-4zM88 8h4v4h-4zM104 8h4v4h-4zM112 8h4v4h-4zM140 8h4v4h-4zM148 8h4v4h-4zM172 8h4v4h-4zM64 12h4v4h-4zM68 12h4v4h-4zM76 12h4v4h-4zM80 12h4v4h-4zM124 12h4v4h-4zM136 12h4v4h-4zM172 12h4v4h-4zM180 12h4v4h-4z"/><path fill="rgb(167,167,167)" d="M40 0h4v4h-4zM176 0h4v4h-4zM184 0h4v4h-4zM4 4h4v4h-4zM20 4h4v4h-4zM48 4h4v4h-4zM68 4h4v4h-4zM104 4h4v4h-4zM28 8h4v4h-4zM176 8h4v4h-4zM16 12h4v4h-4zM40 12h4v4h-4zM108 12h4v4h-4zM132 12h4v4h-4zM152 12h4v4h-4zM168 12h4v4h-4zM188 12h4v4h-4zM192 12h4v4h-4z"/><path fill="rgb(189,189,189)" d="M8 0h4v4h-4zM28 0h4v4h-4zM52 0h4v4h-4zM60 0h4v4h-4zM104 0h4v4h-4zM128 0h4v4h-4zM36 4h4v4h-4zM72 4h4v4h-4zM96 4h4v4h-4zM128 4h4v4h-4zM184 4h4v4h-4zM32 8h4v4h-4zM68 8h4v4h-4zM116 8h4v4h-4zM120 8h4v4h-4zM132 8h4v4h-4zM136 8h4v4h-4zM164 8h4v4h-4zM188 8h4v4h-4zM0 12h4v4h-4zM4 12h4v4h-4zM12 12h4v4h-4zM24 12h4v4h-4zM28 12h4v4h-4zM44 12h4v4h-4zM48 12h4v4h-4zM56 12h4v4h-4zM84 12h4v4h-4zM88 12h4v4h-4zM120 12h4v4h-4zM128 12h4v4h-4zM140 12h4v4h-4zM160 12h4v4h-4zM184 12h4v4h-4z"/><path fill="rgb(213,213,213)" d="M72 0h4v4h-4zM84 0h4v4h-4zM144 0h4v4h-4zM88 4h4v4h-4zM152 4h4v4h-4zM20 8h4v4h-4zM92 8h4v4h-4zM8 12h4v4h-4zM32 12h4v4h-4zM36 12h4v4h-4zM52 12h4v4h-4zM60 12h4v4h-4zM100 12h4v4h-4zM104 12h4v4h-4zM144 12h4v4h-4zM176 12h4v4h-4z"/><path fill="rgb(240,240,240)" d="M96 0h4v4h-4zM140 0h4v4h-4zM188 0h4v4h-4zM140 4h4v4h-4zM164 4h4v4h-4zM64 8h4v4h-4zM180 8h4v4h-4zM72 12h4v4h-4z"/></svg>
<div class="t" style="left:1046px;top:324px;width:151px;text-align:right;font-size:19.33px">1</div>
<div class="t" style="left:1202px;top:324px;font-size:19.33px"><span class="sx" style="transform-origin:0 0;transform:scaleX(1.02)">03/10/2018</span></div>
<svg class="a" style="left:1346px;top:326px" width="68" height="16" shape-rendering="crispEdges"><path fill="rgb(110,110,110)" d="M12 4h4v4h-4zM24 4h4v4h-4zM0 8h4v4h-4zM4 8h4v4h-4zM32 8h4v4h-4z"/><path fill="rgb(128,128,128)" d="M52 0h4v4h-4zM60 0h4v4h-4zM4 4h4v4h-4zM16 4h4v4h-4zM40 4h4v4h-4zM12 8h4v4h-4zM40 8h4v4h-4zM48 8h4v4h-4z"/><path fill="rgb(147,147,147)" d="M4 0h4v4h-4zM12 0h4v4h-4zM16 0h4v4h-4zM24 0h4v4h-4zM28 0h4v4h-4zM36 0h4v4h-4zM40 0h4v4h-4zM48 0h4v4h-4zM56 0h4v4h-4zM28 4h4v4h-4zM36 4h4v4h-4zM8 8h4v4h-4zM16 8h4v4h-4zM24 8h4v4h-4zM28 8h4v4h-4zM16 12h4v4h-4zM28 12h4v4h-4zM36 12h4v4h-4zM56 12h4v4h-4zM60 12h4v4h-4z"/><path fill="rgb(167,167,167)" d="M32 4h4v4h-4zM48 4h4v4h-4zM60 4h4v4h-4zM20 8h4v4h-4zM56 8h4v4h-4zM60 8h4v4h-4zM12 12h4v4h-4zM24 12h4v4h-4zM48 12h4v4h-4z"/><path fill="rgb(189,189,189)" d="M32 0h4v4h-4zM44 0h4v4h-4zM0 4h4v4h-4zM8 4h4v4h-4zM20 4h4v4h-4zM52 4h4v4h-4zM64 4h4v4h-4zM40 12h4v4h-4zM64 12h4v4h-4z"/><path fill="rgb(213,213,213)" d="M8 0h4v4h-4zM64 0h4v4h-4zM56 4h4v4h-4zM36 8h4v4h-4zM4 12h4v4h-4zM8 12h4v4h-4zM32 12h4v4h-4z"/><path fill="rgb(240,240,240)" d="M20 0h4v4h-4zM20 12h4v4h-4z"/></svg>
<div class="a" style="left:498px;top:326px;width:13px;height:13px;background:#fff;border:1px solid #333"></div>
<div class="a" style="left:424px;top:373px;width:1053px;height:1px;background:#e6e6e6"></div>
<div class="a" style="left:571px;top:347px;width:192px;height:26px;background:#22c896"></div>
<div class="t" style="left:573px;top:351px;font-size:19.33px"><span class="sx" style="transform-origin:0 0;transform:scaleX(1.0)">CHIUSA</span></div>
<svg class="a" style="left:767px;top:353px" width="196" height="16" shape-rendering="crispEdges"><path fill="rgb(95,95,95)" d="M104 4h4v4h-4zM140 8h4v4h-4zM156 8h4v4h-4z"/><path fill="rgb(110,110,110)" d="M4 0h4v4h-4zM68 0h4v4h-4zM104 0h4v4h-4zM156 0h4v4h-4zM192 0h4v4h-4zM12 4h4v4h-4zM68 4h4v4h-4zM116 4h4v4h-4zM156 4h4v4h-4zM28 8h4v4h-4zM76 8h4v4h-4zM148 8h4v4h-4zM152 8h4v4h-4z"/><path fill="rgb(128,128,128)" d="M12 0h4v4h-4zM20 0h4v4h-4zM60 0h4v4h-4zM88 0h4v4h-4zM144 0h4v4h-4zM176 0h4v4h-4zM4 4h4v4h-4zM20 4h4v4h-4zM28 4h4v4h-4zM40 4h4v4h-4zM52 4h4v4h-4zM64 4h4v4h-4zM76 4h4v4h-4zM96 4h4v4h-4zM140 4h4v4h-4zM164 4h4v4h-4zM168 4h4v4h-4zM176 4h4v4h-4zM4 8h4v4h-4zM12 8h4v4h-4zM20 8h4v4h-4zM40 8h4v4h-4zM52 8h4v4h-4zM84 8h4v4h-4zM96 8h4v4h-4zM104 8h4v4h-4zM124 8h4v4h-4zM168 8h4v4h-4zM180 8h4v4h-4zM96 12h4v4h-4zM132 12h4v4h-4z"/><path fill="rgb(147,147,147)" d="M0 0h4v4h-4zM8 0h4v4h-4zM16 0h4v4h-4zM28 0h4v4h-4zM32 0h4v4h-4zM36 0h4v4h-4zM40 0h4v4h-4zM52 0h4v4h-4zM56 0h4v4h-4zM76 0h4v4h-4zM84 0h4v4h-4zM96 0h4v4h-4zM108 0h4v4h-4zM116 0h4v4h-4zM120 0h4v4h-4zM164 0h4v4h-4zM168 0h4v4h-4zM188 0h4v4h-4zM108 4h4v4h-4zM120 4h4v4h-4zM132 4h4v4h-4zM144 4h4v4h-4zM152 4h4v4h-4zM188 4h4v4h-4zM64 8h4v4h-4zM68 8h4v4h-4zM72 8h4v4h-4zM132 8h4v4h-4zM144 8h4v4h-4zM160 8h4v4h-4zM32 12h4v4h-4zM44 12h4v4h-4zM56 12h4v4h-4zM76 12h4v4h-4zM104 12h4v4h-4zM108 12h4v4h-4zM120 12h4v4h-4zM128 12h4v4h-4zM164 12h4v4h-4zM176 12h4v4h-4zM184 12h4v4h-4zM188 12h4v4h-4zM192 12h4v4h-4z"/><path fill="rgb(167,167,167)" d="M128 0h4v4h-4zM132 0h4v4h-4zM180 0h4v4h-4zM16 4h4v4h-4zM72 4h4v4h-4zM84 4h4v4h-4zM172 4h4v4h-4zM180 4h4v4h-4zM164 8h4v4h-4zM184 8h4v4h-4zM188 8h4v4h-4zM4 12h4v4h-4zM12 12h4v4h-4zM36 12h4v4h-4zM40 12h4v4h-4zM48 12h4v4h-4zM52 12h4v4h-4zM60 12h4v4h-4zM84 12h4v4h-4zM92 12h4v4h-4zM112 12h4v4h-4zM148 12h4v4h-4zM168 12h4v4h-4zM180 12h4v4h-4z"/><path fill="rgb(189,189,189)" d="M80 0h4v4h-4zM92 0h4v4h-4zM112 0h4v4h-4zM124 0h4v4h-4zM172 0h4v4h-4zM184 0h4v4h-4zM24 4h4v4h-4zM88 4h4v4h-4zM112 4h4v4h-4zM148 4h4v4h-4zM192 4h4v4h-4zM36 8h4v4h-4zM60 8h4v4h-4zM116 8h4v4h-4zM172 8h4v4h-4zM20 12h4v4h-4zM28 12h4v4h-4zM68 12h4v4h-4zM100 12h4v4h-4zM116 12h4v4h-4zM136 12h4v4h-4zM156 12h4v4h-4z"/><path fill="rgb(213,213,213)" d="M24 0h4v4h-4zM64 0h4v4h-4zM100 0h4v4h-4zM140 0h4v4h-4zM160 0h4v4h-4zM36 4h4v4h-4zM60 4h4v4h-4zM100 4h4v4h-4zM124 4h4v4h-4zM128 4h4v4h-4zM160 4h4v4h-4zM16 8h4v4h-4zM100 8h4v4h-4zM128 8h4v4h-4zM176 8h4v4h-4zM24 12h4v4h-4zM124 12h4v4h-4zM140 12h4v4h-4zM172 12h4v4h-4z"/><path fill="rgb(240,240,240)" d="M44 0h4v4h-4zM44 4h4v4h-4zM92 4h4v4h-4zM24 8h4v4h-4zM44 8h4v4h-4zM120 8h4v4h-4zM136 8h4v4h-4zM64 12h4v4h-4zM72 12h4v4h-4zM160 12h4v4h-4z"/></svg>
<div class="t" style="left:1046px;top:351px;width:151px;text-align:right;font-size:19.33px">1</div>
<div class="t" style="left:1202px;top:351px;font-size:19.33px"><span class="sx" style="transform-origin:0 0;transform:scaleX(1.02)">Ieri</span></div>
<svg class="a" style="left:1346px;top:353px" width="68" height="16" shape-rendering="crispEdges"><path fill="rgb(95,95,95)" d="M60 8h4v4h-4z"/><path fill="rgb(110,110,110)" d="M60 0h4v4h-4zM12 4h4v4h-4zM24 4h4v4h-4zM40 4h4v4h-4zM60 4h4v4h-4zM0 8h4v4h-4zM4 8h4v4h-4zM40 8h4v4h-4zM52 8h4v4h-4zM56 8h4v4h-4z"/><path fill="rgb(128,128,128)" d="M4 4h4v4h-4zM16 4h4v4h-4zM32 4h4v4h-4zM48 4h4v4h-4zM12 8h4v4h-4zM44 8h4v4h-4z"/><path fill="rgb(147,147,147)" d="M4 0h4v4h-4zM12 0h4v4h-4zM16 0h4v4h-4zM24 0h4v4h-4zM28 0h4v4h-4zM36 0h4v4h-4zM28 4h4v4h-4zM52 4h4v4h-4zM8 8h4v4h-4zM16 8h4v4h-4zM24 8h4v4h-4zM28 8h4v4h-4zM36 8h4v4h-4zM48 8h4v4h-4zM16 12h4v4h-4zM28 12h4v4h-4zM36 12h4v4h-4z"/><path fill="rgb(167,167,167)" d="M40 0h4v4h-4zM48 0h4v4h-4zM52 0h4v4h-4zM56 4h4v4h-4zM20 8h4v4h-4zM32 8h4v4h-4zM12 12h4v4h-4zM24 12h4v4h-4z"/><path fill="rgb(189,189,189)" d="M32 0h4v4h-4zM0 4h4v4h-4zM8 4h4v4h-4zM20 4h4v4h-4zM64 8h4v4h-4zM40 12h4v4h-4zM52 12h4v4h-4zM60 12h4v4h-4z"/><path fill="rgb(213,213,213)" d="M8 0h4v4h-4zM44 4h4v4h-4zM4 12h4v4h-4zM8 12h4v4h-4zM32 12h4v4h-4z"/><path fill="rgb(240,240,240)" d="M20 0h4v4h-4zM64 0h4v4h-4zM36 4h4v4h-4zM64 4h4v4h-4zM20 12h4v4h-4zM48 12h4v4h-4z"/></svg>
<div class="a" style="left:498px;top:353px;width:13px;height:13px;background:#fff;border:1px solid #333"></div>
<svg class="a" style="left:498px;top:353px" width="13" height="13"><path d="M2 6.3 L5.1 9.4 L10.8 3.4" stroke="#333" stroke-width="1.15" fill="none"/></svg>
<div class="a" style="left:439px;top:347px;width:1038px;height:2px;background:#00007a"></div>
<div class="a" style="left:439px;top:371px;width:1038px;height:2px;background:#00007a"></div>
<svg class="a" style="left:430px;top:354px" width="6" height="11"><path d="M0 0 L6 5.5 L0 11 Z" fill="#000"/></svg>
<div class="a" style="left:424px;top:400px;width:1053px;height:1px;background:#e6e6e6"></div>
<div class="a" style="left:571px;top:374px;width:192px;height:26px;background:#22c896"></div>
<div class="t" style="left:573px;top:378px;font-size:19.33px"><span class="sx" style="transform-origin:0 0;transform:scaleX(1.0)">CHIUSA</span></div>
<svg class="a" style="left:767px;top:380px" width="196" height="16" shape-rendering="crispEdges"><path fill="rgb(95,95,95)" d="M104 8h4v4h-4z"/><path fill="rgb(110,110,110)" d="M0 0h4v4h-4zM0 4h4v4h-4zM48 4h4v4h-4zM56 4h4v4h-4zM112 4h4v4h-4zM124 4h4v4h-4zM136 4h4v4h-4zM180 8h4v4h-4zM188 8h4v4h-4z"/><path fill="rgb(128,128,128)" d="M48 0h4v4h-4zM56 0h4v4h-4zM68 0h4v4h-4zM84 0h4v4h-4zM96 0h4v4h-4zM104 0h4v4h-4zM136 0h4v4h-4zM184 0h4v4h-4zM8 4h4v4h-4zM28 4h4v4h-4zM40 4h4v4h-4zM64 4h4v4h-4zM68 4h4v4h-4zM76 4h4v4h-4zM80 4h4v4h-4zM104 4h4v4h-4zM148 4h4v4h-4zM152 4h4v4h-4zM172 4h4v4h-4zM184 4h4v4h-4zM192 4h4v4h-4zM4 8h4v4h-4zM24 8h4v4h-4zM28 8h4v4h-4zM40 8h4v4h-4zM48 8h4v4h-4zM60 8h4v4h-4zM64 8h4v4h-4zM68 8h4v4h-4zM76 8h4v4h-4zM88 8h4v4h-4zM132 8h4v4h-4zM136 8h4v4h-4zM148 8h4v4h-4zM172 8h4v4h-4zM172 12h4v4h-4z"/><path fill="rgb(147,147,147)" d="M16 0h4v4h-4zM20 0h4v4h-4zM32 0h4v4h-4zM36 0h4v4h-4zM40 0h4v4h-4zM44 0h4v4h-4zM72 0h4v4h-4zM92 0h4v4h-4zM108 0h4v4h-4zM116 0h4v4h-4zM120 0h4v4h-4zM124 0h4v4h-4zM128 0h4v4h-4zM140 0h4v4h-4zM152 0h4v4h-4zM172 0h4v4h-4zM192 0h4v4h-4zM12 4h4v4h-4zM16 4h4v4h-4zM84 4h4v4h-4zM96 4h4v4h-4zM120 4h4v4h-4zM128 4h4v4h-4zM140 4h4v4h-4zM164 4h4v4h-4zM180 4h4v4h-4zM0 8h4v4h-4zM8 8h4v4h-4zM12 8h4v4h-4zM56 8h4v4h-4zM80 8h4v4h-4zM108 8h4v4h-4zM116 8h4v4h-4zM120 8h4v4h-4zM156 8h4v4h-4zM164 8h4v4h-4zM20 12h4v4h-4zM32 12h4v4h-4zM68 12h4v4h-4zM72 12h4v4h-4zM84 12h4v4h-4zM92 12h4v4h-4zM96 12h4v4h-4zM128 12h4v4h-4zM140 12h4v4h-4zM144 12h4v4h-4zM152 12h4v4h-4zM160 12h4v4h-4zM164 12h4v4h-4z"/><path fill="rgb(167,167,167)" d="M8 0h4v4h-4zM12 0h4v4h-4zM24 0h4v4h-4zM28 0h4v4h-4zM64 0h4v4h-4zM76 0h4v4h-4zM88 0h4v4h-4zM112 0h4v4h-4zM144 0h4v4h-4zM148 0h4v4h-4zM160 0h4v4h-4zM164 0h4v4h-4zM176 0h4v4h-4zM20 4h4v4h-4zM44 4h4v4h-4zM60 4h4v4h-4zM116 4h4v4h-4zM144 4h4v4h-4zM188 4h4v4h-4zM92 8h4v4h-4zM124 8h4v4h-4zM184 8h4v4h-4zM192 8h4v4h-4zM4 12h4v4h-4zM16 12h4v4h-4zM64 12h4v4h-4zM116 12h4v4h-4zM120 12h4v4h-4zM136 12h4v4h-4zM148 12h4v4h-4zM168 12h4v4h-4zM180 12h4v4h-4zM188 12h4v4h-4z"/><path fill="rgb(189,189,189)" d="M132 0h4v4h-4zM168 0h4v4h-4zM4 4h4v4h-4zM88 4h4v4h-4zM100 4h4v4h-4zM156 4h4v4h-4zM16 8h4v4h-4zM36 8h4v4h-4zM96 8h4v4h-4zM112 8h4v4h-4zM152 8h4v4h-4zM0 12h4v4h-4zM12 12h4v4h-4zM24 12h4v4h-4zM28 12h4v4h-4zM36 12h4v4h-4zM40 12h4v4h-4zM48 12h4v4h-4zM56 12h4v4h-4zM76 12h4v4h-4zM88 12h4v4h-4zM104 12h4v4h-4zM124 12h4v4h-4zM176 12h4v4h-4z"/><path fill="rgb(213,213,213)" d="M52 0h4v4h-4zM80 0h4v4h-4zM100 0h4v4h-4zM156 0h4v4h-4zM180 0h4v4h-4zM188 0h4v4h-4zM24 4h4v4h-4zM36 4h4v4h-4zM52 4h4v4h-4zM92 4h4v4h-4zM108 4h4v4h-4zM132 4h4v4h-4zM160 4h4v4h-4zM176 4h4v4h-4zM44 8h4v4h-4zM52 8h4v4h-4zM84 8h4v4h-4zM160 8h4v4h-4zM8 12h4v4h-4zM52 12h4v4h-4zM60 12h4v4h-4zM100 12h4v4h-4zM132 12h4v4h-4zM156 12h4v4h-4z"/><path fill="rgb(240,240,240)" d="M168 4h4v4h-4zM20 8h4v4h-4zM100 8h4v4h-4zM80 12h4v4h-4zM184 12h4v4h-4zM192 12h4v4h-4z"/></svg>
<div class="t" style="left:1046px;top:378px;width:151px;text-align:right;font-size:19.33px">1</div>
<div class="t" style="left:1202px;top:378px;font-size:19.33px"><span class="sx" style="transform-origin:0 0;transform:scaleX(1.02)">01/10/2018</span></div>
<svg class="a" style="left:1346px;top:380px" width="68" height="16" shape-rendering="crispEdges"><path fill="rgb(95,95,95)" d="M28 8h4v4h-4z"/><path fill="rgb(110,110,110)" d="M12 4h4v4h-4zM56 4h4v4h-4zM0 8h4v4h-4zM4 8h4v4h-4zM40 8h4v4h-4z"/><path fill="rgb(128,128,128)" d="M28 0h4v4h-4zM48 0h4v4h-4zM56 0h4v4h-4zM4 4h4v4h-4zM16 4h4v4h-4zM24 4h4v4h-4zM28 4h4v4h-4zM40 4h4v4h-4zM48 4h4v4h-4zM12 8h4v4h-4zM24 8h4v4h-4zM48 8h4v4h-4zM48 12h4v4h-4z"/><path fill="rgb(147,147,147)" d="M4 0h4v4h-4zM12 0h4v4h-4zM16 0h4v4h-4zM36 0h4v4h-4zM40 0h4v4h-4zM60 0h4v4h-4zM60 4h4v4h-4zM8 8h4v4h-4zM16 8h4v4h-4zM20 8h4v4h-4zM64 8h4v4h-4zM16 12h4v4h-4zM36 12h4v4h-4zM60 12h4v4h-4z"/><path fill="rgb(167,167,167)" d="M32 8h4v4h-4zM12 12h4v4h-4zM52 12h4v4h-4zM56 12h4v4h-4z"/><path fill="rgb(189,189,189)" d="M32 0h4v4h-4zM0 4h4v4h-4zM8 4h4v4h-4zM36 4h4v4h-4zM56 8h4v4h-4zM28 12h4v4h-4zM40 12h4v4h-4zM44 12h4v4h-4z"/><path fill="rgb(213,213,213)" d="M8 0h4v4h-4zM44 0h4v4h-4zM64 0h4v4h-4zM20 4h4v4h-4zM32 4h4v4h-4zM64 4h4v4h-4zM36 8h4v4h-4zM60 8h4v4h-4zM4 12h4v4h-4zM8 12h4v4h-4zM32 12h4v4h-4zM64 12h4v4h-4z"/><path fill="rgb(240,240,240)" d="M20 0h4v4h-4zM24 0h4v4h-4zM44 4h4v4h-4zM20 12h4v4h-4z"/></svg>
<div class="a" style="left:498px;top:380px;width:13px;height:13px;background:#fff;border:1px solid #333"></div>
<div class="a" style="left:424px;top:427px;width:1053px;height:1px;background:#e6e6e6"></div>
<div class="a" style="left:571px;top:401px;width:192px;height:26px;background:#22c896"></div>
<div class="t" style="left:573px;top:405px;font-size:19.33px"><span class="sx" style="transform-origin:0 0;transform:scaleX(1.0)">CHIUSA</span></div>
<svg class="a" style="left:767px;top:407px" width="196" height="16" shape-rendering="crispEdges"><path fill="rgb(95,95,95)" d="M140 4h4v4h-4z"/><path fill="rgb(110,110,110)" d="M56 0h4v4h-4zM120 0h4v4h-4zM96 4h4v4h-4zM28 8h4v4h-4zM64 8h4v4h-4zM192 8h4v4h-4z"/><path fill="rgb(128,128,128)" d="M0 0h4v4h-4zM20 0h4v4h-4zM36 0h4v4h-4zM80 0h4v4h-4zM100 0h4v4h-4zM108 0h4v4h-4zM112 0h4v4h-4zM132 0h4v4h-4zM140 0h4v4h-4zM0 4h4v4h-4zM8 4h4v4h-4zM12 4h4v4h-4zM28 4h4v4h-4zM44 4h4v4h-4zM48 4h4v4h-4zM56 4h4v4h-4zM60 4h4v4h-4zM64 4h4v4h-4zM68 4h4v4h-4zM72 4h4v4h-4zM80 4h4v4h-4zM152 4h4v4h-4zM156 4h4v4h-4zM176 4h4v4h-4zM0 8h4v4h-4zM8 8h4v4h-4zM12 8h4v4h-4zM24 8h4v4h-4zM40 8h4v4h-4zM68 8h4v4h-4zM76 8h4v4h-4zM80 8h4v4h-4zM92 8h4v4h-4zM96 8h4v4h-4zM140 8h4v4h-4zM152 8h4v4h-4zM176 8h4v4h-4zM120 12h4v4h-4zM176 12h4v4h-4z"/><path fill="rgb(147,147,147)" d="M4 0h4v4h-4zM16 0h4v4h-4zM32 0h4v4h-4zM68 0h4v4h-4zM88 0h4v4h-4zM96 0h4v4h-4zM128 0h4v4h-4zM144 0h4v4h-4zM152 0h4v4h-4zM156 0h4v4h-4zM164 0h4v4h-4zM176 0h4v4h-4zM184 0h4v4h-4zM188 0h4v4h-4zM40 4h4v4h-4zM92 4h4v4h-4zM100 4h4v4h-4zM120 4h4v4h-4zM132 4h4v4h-4zM144 4h4v4h-4zM56 8h4v4h-4zM72 8h4v4h-4zM120 8h4v4h-4zM0 12h4v4h-4zM4 12h4v4h-4zM16 12h4v4h-4zM20 12h4v4h-4zM32 12h4v4h-4zM64 12h4v4h-4zM88 12h4v4h-4zM100 12h4v4h-4zM132 12h4v4h-4zM140 12h4v4h-4zM144 12h4v4h-4zM156 12h4v4h-4zM164 12h4v4h-4zM168 12h4v4h-4zM188 12h4v4h-4z"/><path fill="rgb(167,167,167)" d="M8 0h4v4h-4zM28 0h4v4h-4zM40 0h4v4h-4zM52 0h4v4h-4zM64 0h4v4h-4zM92 0h4v4h-4zM148 0h4v4h-4zM192 0h4v4h-4zM20 4h4v4h-4zM52 4h4v4h-4zM76 4h4v4h-4zM88 4h4v4h-4zM112 4h4v4h-4zM164 4h4v4h-4zM168 4h4v4h-4zM180 4h4v4h-4zM192 4h4v4h-4zM52 8h4v4h-4zM60 8h4v4h-4zM100 8h4v4h-4zM112 8h4v4h-4zM132 8h4v4h-4zM136 8h4v4h-4zM156 8h4v4h-4zM168 8h4v4h-4zM184 8h4v4h-4zM36 12h4v4h-4zM96 12h4v4h-4zM124 12h4v4h-4zM128 12h4v4h-4zM148 12h4v4h-4zM152 12h4v4h-4zM172 12h4v4h-4zM184 12h4v4h-4z"/><path fill="rgb(189,189,189)" d="M12 0h4v4h-4zM72 0h4v4h-4zM84 0h4v4h-4zM104 0h4v4h-4zM116 0h4v4h-4zM168 0h4v4h-4zM172 0h4v4h-4zM24 4h4v4h-4zM108 4h4v4h-4zM136 4h4v4h-4zM148 4h4v4h-4zM184 4h4v4h-4zM188 4h4v4h-4zM20 8h4v4h-4zM36 8h4v4h-4zM48 8h4v4h-4zM84 8h4v4h-4zM104 8h4v4h-4zM108 8h4v4h-4zM128 8h4v4h-4zM160 8h4v4h-4zM164 8h4v4h-4zM180 8h4v4h-4zM8 12h4v4h-4zM40 12h4v4h-4zM52 12h4v4h-4zM56 12h4v4h-4zM68 12h4v4h-4zM76 12h4v4h-4zM80 12h4v4h-4zM92 12h4v4h-4zM192 12h4v4h-4z"/><path fill="rgb(213,213,213)" d="M24 0h4v4h-4zM44 0h4v4h-4zM48 0h4v4h-4zM136 0h4v4h-4zM36 4h4v4h-4zM84 4h4v4h-4zM128 4h4v4h-4zM160 4h4v4h-4zM16 8h4v4h-4zM44 8h4v4h-4zM88 8h4v4h-4zM188 8h4v4h-4zM24 12h4v4h-4zM28 12h4v4h-4zM48 12h4v4h-4zM72 12h4v4h-4zM84 12h4v4h-4zM108 12h4v4h-4zM112 12h4v4h-4zM116 12h4v4h-4zM136 12h4v4h-4zM160 12h4v4h-4zM180 12h4v4h-4z"/><path fill="rgb(240,240,240)" d="M60 0h4v4h-4zM76 0h4v4h-4zM124 0h4v4h-4zM160 0h4v4h-4zM116 4h4v4h-4zM124 4h4v4h-4zM172 4h4v4h-4zM124 8h4v4h-4zM12 12h4v4h-4zM44 12h4v4h-4z"/></svg>
<div class="t" style="left:1046px;top:405px;width:151px;text-align:right;font-size:19.33px">1</div>
<div class="t" style="left:1202px;top:405px;font-size:19.33px"><span class="sx" style="transform-origin:0 0;transform:scaleX(1.02)">01/10/2018</span></div>
<svg class="a" style="left:1346px;top:407px" width="68" height="16" shape-rendering="crispEdges"><path fill="rgb(95,95,95)" d="M28 8h4v4h-4z"/><path fill="rgb(110,110,110)" d="M12 4h4v4h-4zM0 8h4v4h-4zM4 8h4v4h-4z"/><path fill="rgb(128,128,128)" d="M28 0h4v4h-4zM4 4h4v4h-4zM16 4h4v4h-4zM24 4h4v4h-4zM28 4h4v4h-4zM32 4h4v4h-4zM40 4h4v4h-4zM48 4h4v4h-4zM56 4h4v4h-4zM64 4h4v4h-4zM12 8h4v4h-4zM24 8h4v4h-4zM32 8h4v4h-4zM40 8h4v4h-4zM44 8h4v4h-4zM52 8h4v4h-4zM56 8h4v4h-4z"/><path fill="rgb(147,147,147)" d="M4 0h4v4h-4zM12 0h4v4h-4zM16 0h4v4h-4zM36 0h4v4h-4zM56 0h4v4h-4zM60 0h4v4h-4zM52 4h4v4h-4zM8 8h4v4h-4zM16 8h4v4h-4zM20 8h4v4h-4zM48 8h4v4h-4zM64 8h4v4h-4zM16 12h4v4h-4zM36 12h4v4h-4zM60 12h4v4h-4z"/><path fill="rgb(167,167,167)" d="M40 0h4v4h-4zM48 0h4v4h-4zM52 0h4v4h-4zM12 12h4v4h-4z"/><path fill="rgb(189,189,189)" d="M32 0h4v4h-4zM0 4h4v4h-4zM8 4h4v4h-4zM28 12h4v4h-4zM40 12h4v4h-4zM52 12h4v4h-4zM56 12h4v4h-4z"/><path fill="rgb(213,213,213)" d="M8 0h4v4h-4zM64 0h4v4h-4zM20 4h4v4h-4zM44 4h4v4h-4zM60 4h4v4h-4zM60 8h4v4h-4zM4 12h4v4h-4zM8 12h4v4h-4zM32 12h4v4h-4z"/><path fill="rgb(240,240,240)" d="M20 0h4v4h-4zM24 0h4v4h-4zM36 4h4v4h-4zM36 8h4v4h-4zM20 12h4v4h-4zM48 12h4v4h-4zM64 12h4v4h-4z"/></svg>
<div class="a" style="left:498px;top:407px;width:13px;height:13px;background:#fff;border:1px solid #333"></div>
<div class="a" style="left:424px;top:454px;width:1053px;height:1px;background:#e6e6e6"></div>
<div class="a" style="left:571px;top:428px;width:192px;height:26px;background:#22c896"></div>
<div class="t" style="left:573px;top:432px;font-size:19.33px"><span class="sx" style="transform-origin:0 0;transform:scaleX(1.0)">CHIUSA</span></div>
<svg class="a" style="left:767px;top:434px" width="196" height="16" shape-rendering="crispEdges"><path fill="rgb(95,95,95)" d="M36 8h4v4h-4zM104 8h4v4h-4z"/><path fill="rgb(110,110,110)" d="M68 0h4v4h-4zM104 0h4v4h-4zM140 0h4v4h-4zM12 4h4v4h-4zM68 4h4v4h-4zM116 4h4v4h-4zM140 4h4v4h-4zM184 4h4v4h-4zM188 4h4v4h-4zM76 8h4v4h-4zM124 8h4v4h-4zM184 8h4v4h-4z"/><path fill="rgb(128,128,128)" d="M0 0h4v4h-4zM16 0h4v4h-4zM20 0h4v4h-4zM28 0h4v4h-4zM132 0h4v4h-4zM156 0h4v4h-4zM0 4h4v4h-4zM8 4h4v4h-4zM28 4h4v4h-4zM32 4h4v4h-4zM44 4h4v4h-4zM56 4h4v4h-4zM76 4h4v4h-4zM104 4h4v4h-4zM112 4h4v4h-4zM132 4h4v4h-4zM156 4h4v4h-4zM160 4h4v4h-4zM172 4h4v4h-4zM0 8h4v4h-4zM8 8h4v4h-4zM12 8h4v4h-4zM28 8h4v4h-4zM48 8h4v4h-4zM56 8h4v4h-4zM88 8h4v4h-4zM100 8h4v4h-4zM132 8h4v4h-4zM168 8h4v4h-4zM172 8h4v4h-4zM180 8h4v4h-4zM140 12h4v4h-4zM152 12h4v4h-4z"/><path fill="rgb(147,147,147)" d="M4 0h4v4h-4zM8 0h4v4h-4zM44 0h4v4h-4zM56 0h4v4h-4zM84 0h4v4h-4zM92 0h4v4h-4zM96 0h4v4h-4zM108 0h4v4h-4zM116 0h4v4h-4zM120 0h4v4h-4zM128 0h4v4h-4zM144 0h4v4h-4zM152 0h4v4h-4zM164 0h4v4h-4zM176 0h4v4h-4zM184 0h4v4h-4zM192 0h4v4h-4zM36 4h4v4h-4zM40 4h4v4h-4zM52 4h4v4h-4zM72 4h4v4h-4zM80 4h4v4h-4zM84 4h4v4h-4zM96 4h4v4h-4zM120 4h4v4h-4zM144 4h4v4h-4zM164 4h4v4h-4zM176 4h4v4h-4zM40 8h4v4h-4zM52 8h4v4h-4zM68 8h4v4h-4zM72 8h4v4h-4zM108 8h4v4h-4zM140 8h4v4h-4zM152 8h4v4h-4zM188 8h4v4h-4zM0 12h4v4h-4zM4 12h4v4h-4zM16 12h4v4h-4zM20 12h4v4h-4zM36 12h4v4h-4zM60 12h4v4h-4zM76 12h4v4h-4zM84 12h4v4h-4zM96 12h4v4h-4zM120 12h4v4h-4zM128 12h4v4h-4zM132 12h4v4h-4zM144 12h4v4h-4zM156 12h4v4h-4zM164 12h4v4h-4zM176 12h4v4h-4z"/><path fill="rgb(167,167,167)" d="M36 0h4v4h-4zM40 0h4v4h-4zM52 0h4v4h-4zM76 0h4v4h-4zM80 0h4v4h-4zM88 0h4v4h-4zM112 0h4v4h-4zM160 0h4v4h-4zM168 0h4v4h-4zM180 0h4v4h-4zM100 4h4v4h-4zM168 4h4v4h-4zM192 8h4v4h-4zM52 12h4v4h-4zM56 12h4v4h-4zM148 12h4v4h-4zM184 12h4v4h-4zM192 12h4v4h-4z"/><path fill="rgb(189,189,189)" d="M24 0h4v4h-4zM100 0h4v4h-4zM124 0h4v4h-4zM148 0h4v4h-4zM48 4h4v4h-4zM88 4h4v4h-4zM148 4h4v4h-4zM180 4h4v4h-4zM24 8h4v4h-4zM32 8h4v4h-4zM80 8h4v4h-4zM92 8h4v4h-4zM96 8h4v4h-4zM116 8h4v4h-4zM128 8h4v4h-4zM136 8h4v4h-4zM156 8h4v4h-4zM160 8h4v4h-4zM8 12h4v4h-4zM28 12h4v4h-4zM40 12h4v4h-4zM64 12h4v4h-4zM68 12h4v4h-4zM88 12h4v4h-4zM92 12h4v4h-4zM104 12h4v4h-4zM116 12h4v4h-4zM160 12h4v4h-4zM168 12h4v4h-4zM180 12h4v4h-4z"/><path fill="rgb(213,213,213)" d="M12 0h4v4h-4zM32 0h4v4h-4zM136 0h4v4h-4zM172 0h4v4h-4zM188 0h4v4h-4zM24 4h4v4h-4zM92 4h4v4h-4zM108 4h4v4h-4zM124 4h4v4h-4zM128 4h4v4h-4zM136 4h4v4h-4zM152 4h4v4h-4zM16 8h4v4h-4zM44 8h4v4h-4zM112 8h4v4h-4zM24 12h4v4h-4zM44 12h4v4h-4zM48 12h4v4h-4zM80 12h4v4h-4zM100 12h4v4h-4zM124 12h4v4h-4zM136 12h4v4h-4zM172 12h4v4h-4z"/><path fill="rgb(240,240,240)" d="M64 0h4v4h-4zM16 4h4v4h-4zM64 4h4v4h-4zM20 8h4v4h-4zM64 8h4v4h-4zM84 8h4v4h-4zM120 8h4v4h-4zM164 8h4v4h-4zM176 8h4v4h-4z"/></svg>
<div class="t" style="left:1046px;top:432px;width:151px;text-align:right;font-size:19.33px">1</div>
<div class="t" style="left:1202px;top:432px;font-size:19.33px"><span class="sx" style="transform-origin:0 0;transform:scaleX(1.02)">01/10/2018</span></div>
<svg class="a" style="left:1346px;top:434px" width="68" height="16" shape-rendering="crispEdges"><path fill="rgb(110,110,110)" d="M12 4h4v4h-4zM0 8h4v4h-4zM4 8h4v4h-4zM40 8h4v4h-4z"/><path fill="rgb(128,128,128)" d="M4 4h4v4h-4zM16 4h4v4h-4zM32 4h4v4h-4zM44 4h4v4h-4zM56 4h4v4h-4zM60 4h4v4h-4zM12 8h4v4h-4zM44 8h4v4h-4zM52 8h4v4h-4zM56 8h4v4h-4z"/><path fill="rgb(147,147,147)" d="M4 0h4v4h-4zM12 0h4v4h-4zM16 0h4v4h-4zM24 0h4v4h-4zM36 0h4v4h-4zM48 0h4v4h-4zM56 0h4v4h-4zM60 0h4v4h-4zM28 4h4v4h-4zM36 4h4v4h-4zM48 4h4v4h-4zM8 8h4v4h-4zM16 8h4v4h-4zM28 8h4v4h-4zM64 8h4v4h-4zM16 12h4v4h-4zM24 12h4v4h-4zM28 12h4v4h-4zM36 12h4v4h-4zM48 12h4v4h-4zM60 12h4v4h-4z"/><path fill="rgb(167,167,167)" d="M28 0h4v4h-4zM32 0h4v4h-4zM40 0h4v4h-4zM52 0h4v4h-4zM12 12h4v4h-4zM56 12h4v4h-4z"/><path fill="rgb(189,189,189)" d="M0 4h4v4h-4zM8 4h4v4h-4zM24 4h4v4h-4zM40 4h4v4h-4zM52 4h4v4h-4zM64 4h4v4h-4zM20 8h4v4h-4zM32 8h4v4h-4zM60 8h4v4h-4zM32 12h4v4h-4zM40 12h4v4h-4zM52 12h4v4h-4z"/><path fill="rgb(213,213,213)" d="M8 0h4v4h-4zM44 0h4v4h-4zM64 0h4v4h-4zM20 4h4v4h-4zM24 8h4v4h-4zM4 12h4v4h-4zM8 12h4v4h-4zM44 12h4v4h-4zM64 12h4v4h-4z"/><path fill="rgb(240,240,240)" d="M20 0h4v4h-4zM36 8h4v4h-4zM48 8h4v4h-4zM20 12h4v4h-4z"/></svg>
<div class="a" style="left:498px;top:434px;width:13px;height:13px;background:#fff;border:1px solid #333"></div>
<div class="a" style="left:424px;top:481px;width:1053px;height:1px;background:#e6e6e6"></div>
<div class="a" style="left:571px;top:455px;width:192px;height:26px;background:#22c896"></div>
<div class="t" style="left:573px;top:459px;font-size:19.33px"><span class="sx" style="transform-origin:0 0;transform:scaleX(1.0)">CHIUSA</span></div>
<svg class="a" style="left:767px;top:461px" width="196" height="16" shape-rendering="crispEdges"><path fill="rgb(95,95,95)" d="M40 4h4v4h-4zM48 4h4v4h-4zM44 8h4v4h-4zM120 8h4v4h-4z"/><path fill="rgb(110,110,110)" d="M56 0h4v4h-4zM56 4h4v4h-4zM0 8h4v4h-4zM32 8h4v4h-4zM64 8h4v4h-4zM96 8h4v4h-4z"/><path fill="rgb(128,128,128)" d="M40 0h4v4h-4zM48 0h4v4h-4zM92 0h4v4h-4zM108 0h4v4h-4zM120 0h4v4h-4zM140 0h4v4h-4zM144 0h4v4h-4zM152 0h4v4h-4zM0 4h4v4h-4zM12 4h4v4h-4zM24 4h4v4h-4zM28 4h4v4h-4zM64 4h4v4h-4zM68 4h4v4h-4zM88 4h4v4h-4zM96 4h4v4h-4zM116 4h4v4h-4zM120 4h4v4h-4zM128 4h4v4h-4zM136 4h4v4h-4zM156 4h4v4h-4zM160 4h4v4h-4zM168 4h4v4h-4zM172 4h4v4h-4zM184 4h4v4h-4zM192 4h4v4h-4zM12 8h4v4h-4zM24 8h4v4h-4zM68 8h4v4h-4zM92 8h4v4h-4zM116 8h4v4h-4zM124 8h4v4h-4zM132 8h4v4h-4zM136 8h4v4h-4zM152 8h4v4h-4zM168 8h4v4h-4zM172 8h4v4h-4zM180 8h4v4h-4zM184 8h4v4h-4zM192 8h4v4h-4z"/><path fill="rgb(147,147,147)" d="M4 0h4v4h-4zM8 0h4v4h-4zM12 0h4v4h-4zM24 0h4v4h-4zM68 0h4v4h-4zM80 0h4v4h-4zM84 0h4v4h-4zM96 0h4v4h-4zM104 0h4v4h-4zM156 0h4v4h-4zM164 0h4v4h-4zM176 0h4v4h-4zM192 0h4v4h-4zM36 4h4v4h-4zM60 4h4v4h-4zM104 4h4v4h-4zM132 4h4v4h-4zM176 4h4v4h-4zM180 4h4v4h-4zM36 8h4v4h-4zM40 8h4v4h-4zM48 8h4v4h-4zM56 8h4v4h-4zM60 8h4v4h-4zM108 8h4v4h-4zM112 8h4v4h-4zM128 8h4v4h-4zM164 8h4v4h-4zM4 12h4v4h-4zM16 12h4v4h-4zM64 12h4v4h-4zM72 12h4v4h-4zM80 12h4v4h-4zM84 12h4v4h-4zM92 12h4v4h-4zM104 12h4v4h-4zM108 12h4v4h-4zM140 12h4v4h-4zM144 12h4v4h-4zM152 12h4v4h-4zM156 12h4v4h-4zM164 12h4v4h-4zM176 12h4v4h-4zM188 12h4v4h-4z"/><path fill="rgb(167,167,167)" d="M0 0h4v4h-4zM36 0h4v4h-4zM64 0h4v4h-4zM128 0h4v4h-4zM132 0h4v4h-4zM160 0h4v4h-4zM172 0h4v4h-4zM184 0h4v4h-4zM32 4h4v4h-4zM84 4h4v4h-4zM92 4h4v4h-4zM100 4h4v4h-4zM80 8h4v4h-4zM84 8h4v4h-4zM100 8h4v4h-4zM160 8h4v4h-4zM8 12h4v4h-4zM20 12h4v4h-4zM32 12h4v4h-4zM44 12h4v4h-4zM68 12h4v4h-4zM76 12h4v4h-4zM96 12h4v4h-4zM184 12h4v4h-4z"/><path fill="rgb(189,189,189)" d="M28 0h4v4h-4zM32 0h4v4h-4zM52 0h4v4h-4zM88 0h4v4h-4zM100 0h4v4h-4zM136 0h4v4h-4zM148 0h4v4h-4zM168 0h4v4h-4zM180 0h4v4h-4zM52 4h4v4h-4zM108 4h4v4h-4zM8 8h4v4h-4zM52 8h4v4h-4zM148 8h4v4h-4zM0 12h4v4h-4zM12 12h4v4h-4zM24 12h4v4h-4zM36 12h4v4h-4zM56 12h4v4h-4zM88 12h4v4h-4zM120 12h4v4h-4zM132 12h4v4h-4zM148 12h4v4h-4zM160 12h4v4h-4zM172 12h4v4h-4z"/><path fill="rgb(213,213,213)" d="M116 0h4v4h-4zM8 4h4v4h-4zM16 4h4v4h-4zM44 4h4v4h-4zM80 4h4v4h-4zM124 4h4v4h-4zM148 4h4v4h-4zM16 8h4v4h-4zM28 8h4v4h-4zM140 8h4v4h-4zM144 8h4v4h-4zM156 8h4v4h-4zM176 8h4v4h-4zM40 12h4v4h-4zM48 12h4v4h-4zM52 12h4v4h-4zM100 12h4v4h-4zM128 12h4v4h-4zM168 12h4v4h-4zM180 12h4v4h-4zM192 12h4v4h-4z"/><path fill="rgb(240,240,240)" d="M16 0h4v4h-4zM112 0h4v4h-4zM152 4h4v4h-4zM88 8h4v4h-4zM136 12h4v4h-4z"/></svg>
<div class="t" style="left:1046px;top:459px;width:151px;text-align:right;font-size:19.33px">1</div>
<div class="t" style="left:1202px;top:459px;font-size:19.33px"><span class="sx" style="transform-origin:0 0;transform:scaleX(1.02)">01/10/2018</span></div>
<svg class="a" style="left:1346px;top:461px" width="68" height="16" shape-rendering="crispEdges"><path fill="rgb(110,110,110)" d="M12 4h4v4h-4zM56 4h4v4h-4zM0 8h4v4h-4zM4 8h4v4h-4z"/><path fill="rgb(128,128,128)" d="M48 0h4v4h-4zM56 0h4v4h-4zM4 4h4v4h-4zM16 4h4v4h-4zM40 4h4v4h-4zM48 4h4v4h-4zM12 8h4v4h-4zM36 8h4v4h-4zM48 8h4v4h-4zM48 12h4v4h-4z"/><path fill="rgb(147,147,147)" d="M4 0h4v4h-4zM12 0h4v4h-4zM16 0h4v4h-4zM24 0h4v4h-4zM36 0h4v4h-4zM40 0h4v4h-4zM60 0h4v4h-4zM28 4h4v4h-4zM60 4h4v4h-4zM8 8h4v4h-4zM16 8h4v4h-4zM28 8h4v4h-4zM64 8h4v4h-4zM16 12h4v4h-4zM24 12h4v4h-4zM28 12h4v4h-4zM36 12h4v4h-4zM60 12h4v4h-4z"/><path fill="rgb(167,167,167)" d="M28 0h4v4h-4zM12 12h4v4h-4zM32 12h4v4h-4zM40 12h4v4h-4zM52 12h4v4h-4zM56 12h4v4h-4z"/><path fill="rgb(189,189,189)" d="M32 0h4v4h-4zM0 4h4v4h-4zM8 4h4v4h-4zM24 4h4v4h-4zM20 8h4v4h-4zM56 8h4v4h-4zM44 12h4v4h-4z"/><path fill="rgb(213,213,213)" d="M8 0h4v4h-4zM44 0h4v4h-4zM64 0h4v4h-4zM20 4h4v4h-4zM32 4h4v4h-4zM36 4h4v4h-4zM64 4h4v4h-4zM24 8h4v4h-4zM32 8h4v4h-4zM60 8h4v4h-4zM4 12h4v4h-4zM8 12h4v4h-4zM64 12h4v4h-4z"/><path fill="rgb(240,240,240)" d="M20 0h4v4h-4zM44 4h4v4h-4zM40 8h4v4h-4zM20 12h4v4h-4z"/></svg>
<div class="a" style="left:498px;top:461px;width:13px;height:13px;background:#fff;border:1px solid #333"></div>
<div class="a" style="left:424px;top:508px;width:1053px;height:1px;background:#e6e6e6"></div>
<div class="a" style="left:571px;top:482px;width:192px;height:26px;background:#22c896"></div>
<div class="t" style="left:573px;top:486px;font-size:19.33px"><span class="sx" style="transform-origin:0 0;transform:scaleX(1.0)">CHIUSA</span></div>
<svg class="a" style="left:767px;top:488px" width="196" height="16" shape-rendering="crispEdges"><path fill="rgb(95,95,95)" d="M116 4h4v4h-4zM144 4h4v4h-4z"/><path fill="rgb(110,110,110)" d="M0 0h4v4h-4zM116 0h4v4h-4zM180 0h4v4h-4zM192 0h4v4h-4zM0 4h4v4h-4zM16 4h4v4h-4zM32 4h4v4h-4zM100 4h4v4h-4zM100 8h4v4h-4zM112 8h4v4h-4z"/><path fill="rgb(128,128,128)" d="M24 0h4v4h-4zM32 0h4v4h-4zM44 0h4v4h-4zM76 0h4v4h-4zM88 0h4v4h-4zM136 0h4v4h-4zM144 0h4v4h-4zM8 4h4v4h-4zM12 4h4v4h-4zM24 4h4v4h-4zM40 4h4v4h-4zM44 4h4v4h-4zM60 4h4v4h-4zM88 4h4v4h-4zM92 4h4v4h-4zM108 4h4v4h-4zM128 4h4v4h-4zM156 4h4v4h-4zM172 4h4v4h-4zM180 4h4v4h-4zM192 4h4v4h-4zM0 8h4v4h-4zM4 8h4v4h-4zM12 8h4v4h-4zM16 8h4v4h-4zM24 8h4v4h-4zM36 8h4v4h-4zM40 8h4v4h-4zM44 8h4v4h-4zM60 8h4v4h-4zM116 8h4v4h-4zM144 8h4v4h-4zM156 8h4v4h-4zM164 8h4v4h-4zM172 8h4v4h-4zM180 8h4v4h-4zM192 8h4v4h-4zM172 12h4v4h-4zM180 12h4v4h-4z"/><path fill="rgb(147,147,147)" d="M12 0h4v4h-4zM16 0h4v4h-4zM20 0h4v4h-4zM40 0h4v4h-4zM48 0h4v4h-4zM52 0h4v4h-4zM72 0h4v4h-4zM84 0h4v4h-4zM96 0h4v4h-4zM100 0h4v4h-4zM124 0h4v4h-4zM132 0h4v4h-4zM148 0h4v4h-4zM160 0h4v4h-4zM172 0h4v4h-4zM72 4h4v4h-4zM104 4h4v4h-4zM148 4h4v4h-4zM160 4h4v4h-4zM8 8h4v4h-4zM52 8h4v4h-4zM88 8h4v4h-4zM96 8h4v4h-4zM104 8h4v4h-4zM124 8h4v4h-4zM44 12h4v4h-4zM48 12h4v4h-4zM60 12h4v4h-4zM64 12h4v4h-4zM72 12h4v4h-4zM76 12h4v4h-4zM88 12h4v4h-4zM96 12h4v4h-4zM124 12h4v4h-4zM132 12h4v4h-4zM136 12h4v4h-4zM144 12h4v4h-4zM148 12h4v4h-4zM152 12h4v4h-4zM160 12h4v4h-4z"/><path fill="rgb(167,167,167)" d="M60 0h4v4h-4zM104 0h4v4h-4zM108 0h4v4h-4zM128 0h4v4h-4zM152 0h4v4h-4zM156 0h4v4h-4zM4 4h4v4h-4zM20 4h4v4h-4zM28 4h4v4h-4zM52 4h4v4h-4zM56 4h4v4h-4zM136 4h4v4h-4zM152 4h4v4h-4zM164 4h4v4h-4zM32 8h4v4h-4zM76 8h4v4h-4zM80 8h4v4h-4zM92 8h4v4h-4zM108 8h4v4h-4zM132 8h4v4h-4zM136 8h4v4h-4zM16 12h4v4h-4zM40 12h4v4h-4zM52 12h4v4h-4zM84 12h4v4h-4zM112 12h4v4h-4zM120 12h4v4h-4zM128 12h4v4h-4zM168 12h4v4h-4zM176 12h4v4h-4zM184 12h4v4h-4zM188 12h4v4h-4zM192 12h4v4h-4z"/><path fill="rgb(189,189,189)" d="M8 0h4v4h-4zM28 0h4v4h-4zM68 0h4v4h-4zM92 0h4v4h-4zM120 0h4v4h-4zM164 0h4v4h-4zM168 0h4v4h-4zM36 4h4v4h-4zM68 4h4v4h-4zM76 4h4v4h-4zM112 4h4v4h-4zM140 4h4v4h-4zM28 8h4v4h-4zM56 8h4v4h-4zM68 8h4v4h-4zM84 8h4v4h-4zM120 8h4v4h-4zM188 8h4v4h-4zM0 12h4v4h-4zM4 12h4v4h-4zM12 12h4v4h-4zM24 12h4v4h-4zM28 12h4v4h-4zM68 12h4v4h-4zM100 12h4v4h-4zM104 12h4v4h-4zM116 12h4v4h-4zM140 12h4v4h-4zM156 12h4v4h-4z"/><path fill="rgb(213,213,213)" d="M56 0h4v4h-4zM80 0h4v4h-4zM140 0h4v4h-4zM176 0h4v4h-4zM84 4h4v4h-4zM96 4h4v4h-4zM120 4h4v4h-4zM124 4h4v4h-4zM132 4h4v4h-4zM168 4h4v4h-4zM20 8h4v4h-4zM160 8h4v4h-4zM8 12h4v4h-4zM32 12h4v4h-4zM36 12h4v4h-4zM92 12h4v4h-4zM164 12h4v4h-4z"/><path fill="rgb(240,240,240)" d="M184 0h4v4h-4zM188 0h4v4h-4zM176 4h4v4h-4zM184 4h4v4h-4zM72 8h4v4h-4zM184 8h4v4h-4zM56 12h4v4h-4zM80 12h4v4h-4zM108 12h4v4h-4z"/></svg>
<div class="t" style="left:1046px;top:486px;width:151px;text-align:right;font-size:19.33px">1</div>
<div class="t" style="left:1202px;top:486px;font-size:19.33px"><span class="sx" style="transform-origin:0 0;transform:scaleX(1.02)">01/10/2018</span></div>
<svg class="a" style="left:1346px;top:488px" width="68" height="16" shape-rendering="crispEdges"><path fill="rgb(110,110,110)" d="M36 0h4v4h-4zM12 4h4v4h-4zM0 8h4v4h-4zM12 8h4v4h-4z"/><path fill="rgb(128,128,128)" d="M60 0h4v4h-4zM4 4h4v4h-4zM16 4h4v4h-4zM28 4h4v4h-4zM36 4h4v4h-4zM44 4h4v4h-4zM56 4h4v4h-4zM64 4h4v4h-4zM4 8h4v4h-4zM8 8h4v4h-4zM28 8h4v4h-4zM44 8h4v4h-4zM52 8h4v4h-4zM56 8h4v4h-4zM28 12h4v4h-4zM36 12h4v4h-4z"/><path fill="rgb(147,147,147)" d="M4 0h4v4h-4zM12 0h4v4h-4zM16 0h4v4h-4zM28 0h4v4h-4zM48 0h4v4h-4zM56 0h4v4h-4zM48 4h4v4h-4zM52 4h4v4h-4zM20 8h4v4h-4zM36 8h4v4h-4zM64 8h4v4h-4zM16 12h4v4h-4zM40 12h4v4h-4zM48 12h4v4h-4zM60 12h4v4h-4z"/><path fill="rgb(167,167,167)" d="M24 0h4v4h-4zM44 0h4v4h-4zM52 0h4v4h-4zM8 4h4v4h-4zM12 12h4v4h-4zM24 12h4v4h-4zM32 12h4v4h-4zM56 12h4v4h-4z"/><path fill="rgb(189,189,189)" d="M8 0h4v4h-4zM0 4h4v4h-4zM20 4h4v4h-4zM16 8h4v4h-4zM44 12h4v4h-4zM52 12h4v4h-4z"/><path fill="rgb(213,213,213)" d="M20 0h4v4h-4zM32 0h4v4h-4zM40 0h4v4h-4zM64 0h4v4h-4zM24 4h4v4h-4zM40 4h4v4h-4zM60 4h4v4h-4zM40 8h4v4h-4zM48 8h4v4h-4zM60 8h4v4h-4zM4 12h4v4h-4zM8 12h4v4h-4zM20 12h4v4h-4z"/><path fill="rgb(240,240,240)" d="M32 4h4v4h-4zM64 12h4v4h-4z"/></svg>
<div class="a" style="left:498px;top:488px;width:13px;height:13px;background:#fff;border:1px solid #333"></div>
<div class="a" style="left:424px;top:535px;width:1053px;height:1px;background:#e6e6e6"></div>
<div class="t" style="left:573px;top:513px;font-size:19.33px;font-style:italic"><span class="sx" style="transform-origin:0 0;transform:scaleX(1.02)">CANCELLATA</span></div>
<svg class="a" style="left:767px;top:515px" width="196" height="16" shape-rendering="crispEdges"><path fill="rgb(110,110,110)" d="M16 0h4v4h-4zM108 0h4v4h-4zM120 0h4v4h-4zM192 0h4v4h-4zM140 4h4v4h-4zM48 8h4v4h-4zM92 8h4v4h-4zM104 8h4v4h-4zM112 8h4v4h-4z"/><path fill="rgb(128,128,128)" d="M0 0h4v4h-4zM28 0h4v4h-4zM32 0h4v4h-4zM40 0h4v4h-4zM56 0h4v4h-4zM84 0h4v4h-4zM88 0h4v4h-4zM140 0h4v4h-4zM176 0h4v4h-4zM0 4h4v4h-4zM16 4h4v4h-4zM64 4h4v4h-4zM68 4h4v4h-4zM76 4h4v4h-4zM88 4h4v4h-4zM92 4h4v4h-4zM120 4h4v4h-4zM128 4h4v4h-4zM168 4h4v4h-4zM176 4h4v4h-4zM0 8h4v4h-4zM8 8h4v4h-4zM16 8h4v4h-4zM64 8h4v4h-4zM68 8h4v4h-4zM76 8h4v4h-4zM88 8h4v4h-4zM100 8h4v4h-4zM128 8h4v4h-4zM136 8h4v4h-4zM140 8h4v4h-4zM152 8h4v4h-4zM160 8h4v4h-4zM168 8h4v4h-4zM176 8h4v4h-4zM120 12h4v4h-4zM168 12h4v4h-4zM176 12h4v4h-4z"/><path fill="rgb(147,147,147)" d="M4 0h4v4h-4zM8 0h4v4h-4zM20 0h4v4h-4zM44 0h4v4h-4zM60 0h4v4h-4zM68 0h4v4h-4zM96 0h4v4h-4zM132 0h4v4h-4zM144 0h4v4h-4zM148 0h4v4h-4zM156 0h4v4h-4zM168 0h4v4h-4zM188 0h4v4h-4zM8 4h4v4h-4zM36 4h4v4h-4zM96 4h4v4h-4zM108 4h4v4h-4zM112 4h4v4h-4zM132 4h4v4h-4zM144 4h4v4h-4zM152 4h4v4h-4zM156 4h4v4h-4zM160 4h4v4h-4zM188 4h4v4h-4zM108 8h4v4h-4zM120 8h4v4h-4zM0 12h4v4h-4zM4 12h4v4h-4zM44 12h4v4h-4zM56 12h4v4h-4zM60 12h4v4h-4zM72 12h4v4h-4zM84 12h4v4h-4zM96 12h4v4h-4zM132 12h4v4h-4zM144 12h4v4h-4zM148 12h4v4h-4zM156 12h4v4h-4zM184 12h4v4h-4zM188 12h4v4h-4zM192 12h4v4h-4z"/><path fill="rgb(167,167,167)" d="M12 0h4v4h-4zM24 0h4v4h-4zM48 0h4v4h-4zM76 0h4v4h-4zM100 0h4v4h-4zM128 0h4v4h-4zM152 0h4v4h-4zM160 0h4v4h-4zM164 0h4v4h-4zM28 4h4v4h-4zM48 4h4v4h-4zM52 4h4v4h-4zM104 4h4v4h-4zM136 4h4v4h-4zM148 4h4v4h-4zM28 8h4v4h-4zM36 8h4v4h-4zM40 8h4v4h-4zM52 8h4v4h-4zM184 8h4v4h-4zM188 8h4v4h-4zM40 12h4v4h-4zM88 12h4v4h-4zM124 12h4v4h-4zM140 12h4v4h-4zM164 12h4v4h-4zM172 12h4v4h-4zM180 12h4v4h-4z"/><path fill="rgb(189,189,189)" d="M36 0h4v4h-4zM52 0h4v4h-4zM64 0h4v4h-4zM92 0h4v4h-4zM136 0h4v4h-4zM184 0h4v4h-4zM32 4h4v4h-4zM40 4h4v4h-4zM44 4h4v4h-4zM56 4h4v4h-4zM84 4h4v4h-4zM100 4h4v4h-4zM192 4h4v4h-4zM32 8h4v4h-4zM56 8h4v4h-4zM84 8h4v4h-4zM8 12h4v4h-4zM16 12h4v4h-4zM28 12h4v4h-4zM48 12h4v4h-4zM68 12h4v4h-4zM76 12h4v4h-4zM100 12h4v4h-4zM104 12h4v4h-4zM112 12h4v4h-4zM116 12h4v4h-4zM128 12h4v4h-4zM152 12h4v4h-4zM160 12h4v4h-4z"/><path fill="rgb(213,213,213)" d="M80 0h4v4h-4zM116 0h4v4h-4zM172 0h4v4h-4zM12 4h4v4h-4zM80 4h4v4h-4zM124 4h4v4h-4zM164 4h4v4h-4zM172 4h4v4h-4zM12 8h4v4h-4zM44 8h4v4h-4zM60 8h4v4h-4zM80 8h4v4h-4zM124 8h4v4h-4zM132 8h4v4h-4zM156 8h4v4h-4zM32 12h4v4h-4zM52 12h4v4h-4zM92 12h4v4h-4zM136 12h4v4h-4z"/><path fill="rgb(240,240,240)" d="M112 0h4v4h-4zM124 0h4v4h-4zM20 4h4v4h-4zM116 4h4v4h-4zM20 8h4v4h-4zM96 8h4v4h-4zM164 8h4v4h-4zM64 12h4v4h-4zM80 12h4v4h-4z"/></svg>
<div class="t" style="left:1046px;top:513px;width:151px;text-align:right;font-size:19.33px;font-style:italic">1</div>
<div class="t" style="left:1202px;top:513px;font-size:19.33px;font-style:italic"><span class="sx" style="transform-origin:0 0;transform:scaleX(1.02)">14/09/2018</span></div>
<svg class="a" style="left:1346px;top:515px" width="68" height="16" shape-rendering="crispEdges"><path fill="rgb(95,95,95)" d="M12 4h4v4h-4z"/><path fill="rgb(110,110,110)" d="M24 4h4v4h-4zM56 4h4v4h-4zM0 8h4v4h-4zM4 8h4v4h-4z"/><path fill="rgb(128,128,128)" d="M12 0h4v4h-4zM4 4h4v4h-4zM40 4h4v4h-4zM44 4h4v4h-4zM36 8h4v4h-4zM52 8h4v4h-4zM56 8h4v4h-4z"/><path fill="rgb(147,147,147)" d="M4 0h4v4h-4zM16 0h4v4h-4zM24 0h4v4h-4zM28 0h4v4h-4zM36 0h4v4h-4zM40 0h4v4h-4zM48 0h4v4h-4zM60 0h4v4h-4zM16 4h4v4h-4zM28 4h4v4h-4zM48 4h4v4h-4zM60 4h4v4h-4zM8 8h4v4h-4zM20 8h4v4h-4zM24 8h4v4h-4zM28 8h4v4h-4zM64 8h4v4h-4zM16 12h4v4h-4zM28 12h4v4h-4zM36 12h4v4h-4zM48 12h4v4h-4zM60 12h4v4h-4z"/><path fill="rgb(167,167,167)" d="M44 0h4v4h-4zM56 0h4v4h-4zM16 8h4v4h-4zM32 8h4v4h-4zM12 12h4v4h-4zM24 12h4v4h-4zM32 12h4v4h-4zM40 12h4v4h-4z"/><path fill="rgb(189,189,189)" d="M8 0h4v4h-4zM32 0h4v4h-4zM52 0h4v4h-4zM0 4h4v4h-4zM8 4h4v4h-4zM20 4h4v4h-4zM52 4h4v4h-4zM12 8h4v4h-4zM44 8h4v4h-4zM52 12h4v4h-4zM56 12h4v4h-4z"/><path fill="rgb(213,213,213)" d="M64 0h4v4h-4zM32 4h4v4h-4zM36 4h4v4h-4zM64 4h4v4h-4zM60 8h4v4h-4zM4 12h4v4h-4zM8 12h4v4h-4zM44 12h4v4h-4zM64 12h4v4h-4z"/><path fill="rgb(240,240,240)" d="M20 0h4v4h-4zM40 8h4v4h-4z"/></svg>
<div class="a" style="left:498px;top:515px;width:13px;height:13px;background:#fff;border:1px solid #333"></div>
<div class="a" style="left:1477px;top:271px;width:18px;height:285px;background:#f0f0f0"></div>
<div class="a" style="left:1478px;top:318px;width:15px;height:132px;background:#cdcdcd"></div>
<svg class="a" style="left:1481px;top:277px" width="10" height="7"><path d="M1.5 5.8 L5 2.3 L8.5 5.8" stroke="#505050" stroke-width="2.1" fill="none"/></svg>
<svg class="a" style="left:1481px;top:542px" width="10" height="7"><path d="M1.5 1.2 L5 4.7 L8.5 1.2" stroke="#505050" stroke-width="2.1" fill="none"/></svg>
<div class="a" style="left:423px;top:562px;width:1073px;height:231px;background:#fff;border:1px solid #a8a8a8"></div>
<div class="a" style="left:438px;top:563px;width:1px;height:48px;background:#e6e6e6"></div>
<div class="a" style="left:593px;top:563px;width:1px;height:48px;background:#e6e6e6"></div>
<div class="a" style="left:965px;top:563px;width:1px;height:48px;background:#e6e6e6"></div>
<div class="a" style="left:1073px;top:563px;width:1px;height:48px;background:#e6e6e6"></div>
<div class="a" style="left:1266px;top:563px;width:1px;height:48px;background:#e6e6e6"></div>
<svg class="a" style="left:427px;top:569px" width="9" height="9"><rect x="0.5" y="0.5" width="8" height="8" fill="#f4f6fa" stroke="#8a94a8"/><path d="M2 4.5 H7 M4.5 2 V7" stroke="#3a4a6a" stroke-width="1"/></svg>
<div class="t" style="left:441.40px;top:567.58px;font-size:14px;"><span class="sx" style="transform:scaleX(0.9373)">Minsan10</span></div>
<div class="t" style="left:596.40px;top:567.58px;font-size:14px;"><span class="sx" style="transform:scaleX(0.9330)">Descrizione</span></div>
<div class="t" style="left:968.40px;top:567.58px;font-size:14px;"><span class="sx" style="transform:scaleX(0.9912)">Pezzi</span></div>
<div class="t" style="left:1077.00px;top:567.58px;font-size:14px;"><span class="sx" style="transform:scaleX(0.8824)">Quota</span></div>
<div class="t" style="left:1269.60px;top:567.58px;font-size:14px;"><span class="sx" style="transform:scaleX(0.8983)">Targatura</span></div>
<div class="a" style="left:424px;top:585px;width:1053px;height:1px;background:#d4d4d4"></div>
<div class="a" style="left:439px;top:585px;width:1038px;height:2px;background:#00007a"></div>
<div class="a" style="left:439px;top:609px;width:1038px;height:2px;background:#00007a"></div>
<div class="a" style="left:424px;top:611px;width:15px;height:1px;background:#e6e6e6"></div>
<svg class="a" style="left:429px;top:592px" width="6" height="11"><path d="M0 0 L6 5.5 L0 11 Z" fill="#000"/></svg>
<div class="t" style="left:441px;top:589px;font-size:19.33px"><span class="sx" style="transform-origin:0 0;transform:scaleX(1.03)">038774016</span></div>
<div class="t" style="left:595px;top:589px;font-size:19.33px">MICOFENOLATO M AHCL*50CPR500MG</div>
<div class="t" style="left:965px;top:589px;width:106px;text-align:right;font-size:19.33px">1</div>
<div class="t" style="left:1073px;top:589px;width:191px;text-align:right;font-size:19.33px">34,62</div>
<svg class="a" style="left:1270px;top:590px" width="100" height="16" shape-rendering="crispEdges"><path fill="rgb(95,95,95)" d="M60 8h4v4h-4z"/><path fill="rgb(110,110,110)" d="M88 4h4v4h-4z"/><path fill="rgb(128,128,128)" d="M16 0h4v4h-4zM60 0h4v4h-4zM80 0h4v4h-4zM0 4h4v4h-4zM8 4h4v4h-4zM16 4h4v4h-4zM24 4h4v4h-4zM28 4h4v4h-4zM56 4h4v4h-4zM60 4h4v4h-4zM64 4h4v4h-4zM72 4h4v4h-4zM80 4h4v4h-4zM0 8h4v4h-4zM8 8h4v4h-4zM16 8h4v4h-4zM28 8h4v4h-4zM36 8h4v4h-4zM56 8h4v4h-4zM64 8h4v4h-4zM72 8h4v4h-4zM80 8h4v4h-4zM88 8h4v4h-4zM80 12h4v4h-4z"/><path fill="rgb(147,147,147)" d="M4 0h4v4h-4zM12 0h4v4h-4zM24 0h4v4h-4zM28 0h4v4h-4zM36 0h4v4h-4zM40 0h4v4h-4zM48 0h4v4h-4zM68 0h4v4h-4zM88 0h4v4h-4zM92 0h4v4h-4zM36 4h4v4h-4zM48 4h4v4h-4zM92 4h4v4h-4zM20 8h4v4h-4zM48 8h4v4h-4zM92 8h4v4h-4zM4 12h4v4h-4zM12 12h4v4h-4zM16 12h4v4h-4zM24 12h4v4h-4zM68 12h4v4h-4zM92 12h4v4h-4z"/><path fill="rgb(167,167,167)" d="M0 0h4v4h-4zM32 0h4v4h-4zM44 0h4v4h-4zM52 0h4v4h-4zM72 0h4v4h-4zM24 8h4v4h-4zM28 12h4v4h-4zM88 12h4v4h-4z"/><path fill="rgb(189,189,189)" d="M8 0h4v4h-4zM64 0h4v4h-4zM76 0h4v4h-4zM12 4h4v4h-4zM20 4h4v4h-4zM12 8h4v4h-4zM52 8h4v4h-4zM96 8h4v4h-4zM0 12h4v4h-4zM36 12h4v4h-4zM48 12h4v4h-4zM60 12h4v4h-4zM76 12h4v4h-4zM84 12h4v4h-4z"/><path fill="rgb(213,213,213)" d="M20 0h4v4h-4zM56 0h4v4h-4zM40 4h4v4h-4zM84 4h4v4h-4zM84 8h4v4h-4zM8 12h4v4h-4zM44 12h4v4h-4zM64 12h4v4h-4zM72 12h4v4h-4z"/><path fill="rgb(240,240,240)" d="M52 4h4v4h-4zM76 4h4v4h-4zM4 8h4v4h-4zM32 8h4v4h-4zM44 8h4v4h-4zM20 12h4v4h-4zM32 12h4v4h-4z"/></svg>
<div class="a" style="left:1477px;top:563px;width:18px;height:229px;background:#f0f0f0"></div>
<div class="a" style="left:1478px;top:669px;width:16px;height:17px;background:#cdcdcd"></div>
<svg class="a" style="left:1481px;top:569px" width="10" height="7"><path d="M1.5 5.8 L5 2.3 L8.5 5.8" stroke="#505050" stroke-width="2.1" fill="none"/></svg>
<svg class="a" style="left:1481px;top:779px" width="10" height="7"><path d="M1.5 1.2 L5 4.7 L8.5 1.2" stroke="#505050" stroke-width="2.1" fill="none"/></svg>
<div class="a" style="left:1051px;top:804px;width:211px;height:54px;background:#e1e1e1;border:1px solid #adadad"></div>
<div class="t" style="left:1087.50px;top:821.50px;font-size:19.2px;"><span class="sx" style="transform:scaleX(0.9926)">Emetti scontrino</span></div>
<div class="a" style="left:1284px;top:804px;width:211px;height:54px;background:#e1e1e1;border:1px solid #adadad"></div>
<div class="t" style="left:1362.50px;top:821.50px;font-size:19.2px;"><span class="sx" style="transform:scaleX(0.9774)">Chiudi</span></div>
</body></html>
